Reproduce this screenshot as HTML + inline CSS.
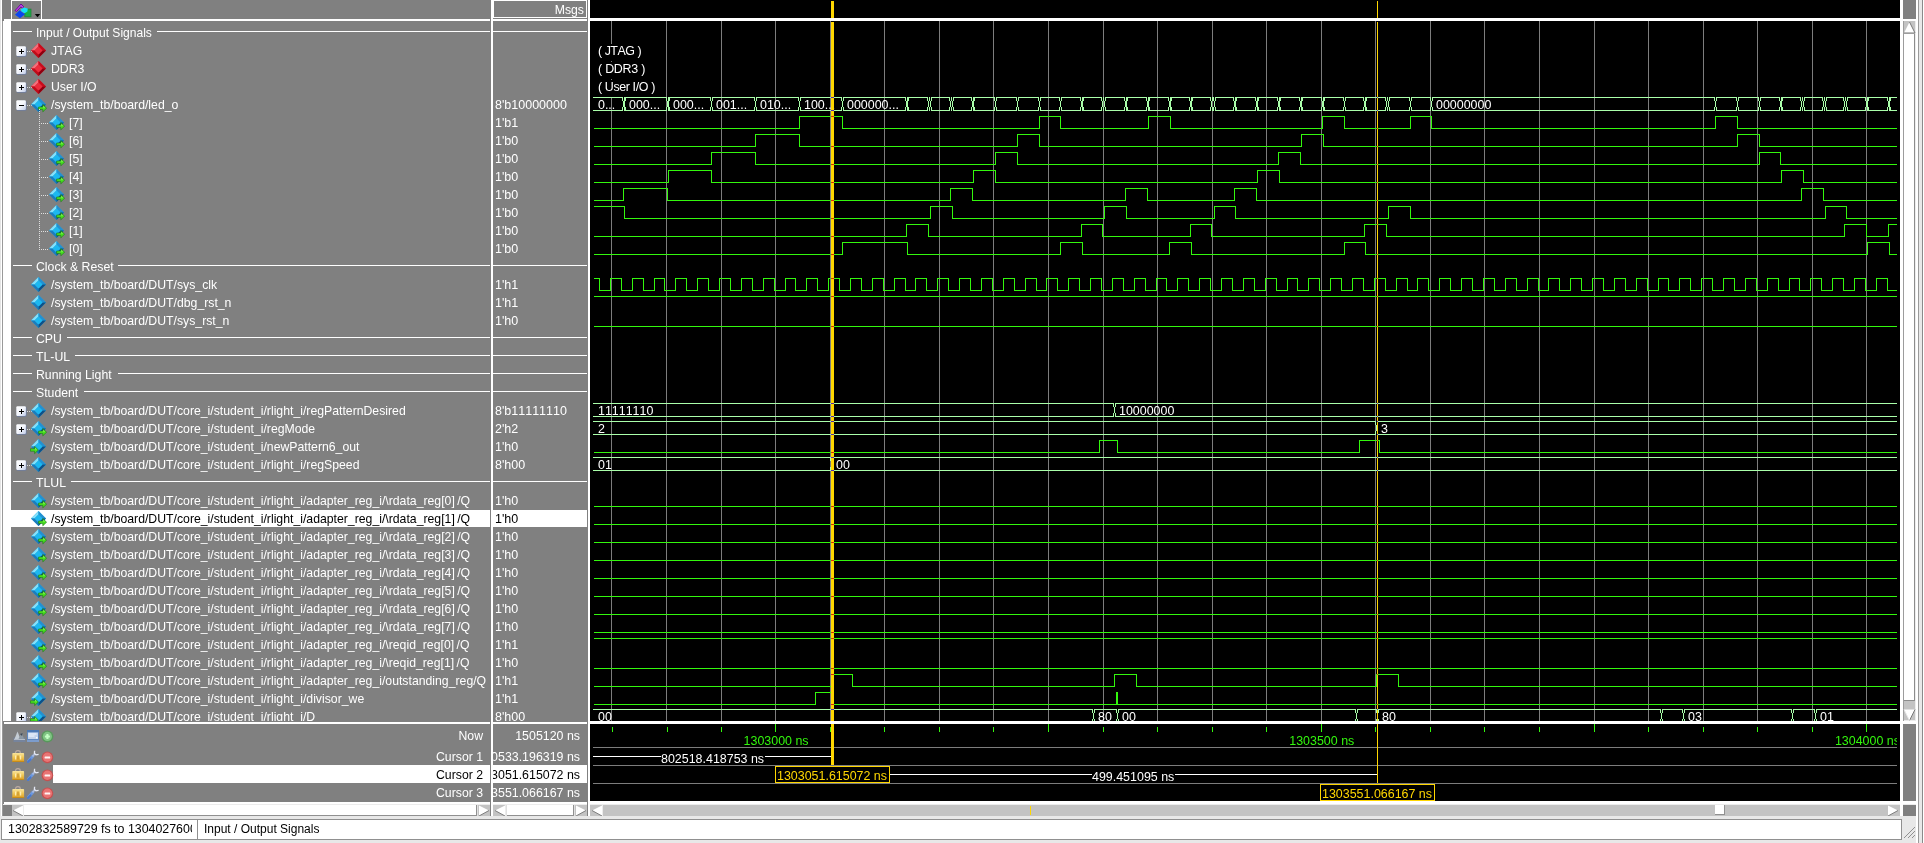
<!DOCTYPE html><html><head><meta charset="utf-8"><title>wave</title><style>

html,body{margin:0;padding:0}
body{width:1924px;height:843px;position:relative;overflow:hidden;background:#808080;font-family:"Liberation Sans",sans-serif;font-size:12.25px;color:#fff;font-kerning:none}
body div,body svg,body span{position:absolute;white-space:pre}
.t{height:18px;line-height:20px}
.r{text-align:right}

#w{left:0;top:0;width:1924px;height:843px;will-change:transform;background:transparent}
</style></head><body><div id="w">

<svg width="0" height="0" style="position:absolute">
<defs>
<linearGradient id="gb" x1="0" y1="0" x2="1" y2="1"><stop offset="0" stop-color="#ffffff"/><stop offset="0.5" stop-color="#f4f6fc"/><stop offset="1" stop-color="#c0cce8"/></linearGradient>
<g id="pbox">
 <rect x="0.6" y="0.8" width="10" height="10" rx="1.6" fill="#6c7ea6" opacity="0.85"/>
 <rect x="0.3" y="0.3" width="9.6" height="9.6" rx="1.2" fill="url(#gb)"/>
</g>
<g id="plus"><use href="#pbox"/>
 <rect x="3" y="5" width="5" height="1" fill="#000"/><rect x="5" y="3" width="1" height="5" fill="#000"/>
</g>
<g id="minus"><use href="#pbox"/>
 <rect x="3" y="5" width="5" height="1" fill="#000"/>
</g>
<g id="red">
 <path d="M7.5 0 L15 7.5 L7.5 15 L0 7.5Z" fill="#d81424"/>
 <path d="M7.5 0 L0 7.5 L3.5 7.5 L7.5 3.5Z" fill="#f4707c"/>
 <path d="M7.5 0 L15 7.5 L11.5 7.5 L7.5 3.5Z" fill="#c80c1c"/>
 <path d="M0 7.5 L7.5 15 L7.5 11.5 L3.5 7.5Z" fill="#c00c1a"/>
 <path d="M15 7.5 L7.5 15 L7.5 11.5 L11.5 7.5Z" fill="#8e0010"/>
 <path d="M7.5 3.5 L11.5 7.5 L7.5 11.5 L3.5 7.5Z" fill="#ec2c3c"/>
</g>
<g id="blue">
 <path d="M7.5 0 L15 7.5 L7.5 15 L0 7.5Z" fill="#18a4e0"/>
 <path d="M7.5 0 L0 7.5 L3.5 7.5 L7.5 3.5Z" fill="#86e0fa"/>
 <path d="M7.5 0 L15 7.5 L11.5 7.5 L7.5 3.5Z" fill="#2490d0"/>
 <path d="M0 7.5 L7.5 15 L7.5 11.5 L3.5 7.5Z" fill="#1c7cbc"/>
 <path d="M15 7.5 L7.5 15 L7.5 11.5 L11.5 7.5Z" fill="#0e5088"/>
 <path d="M7.5 3.5 L11.5 7.5 L7.5 11.5 L3.5 7.5Z" fill="#1cb8f0"/>
</g>
<g id="arrow">
 <path d="M0 2.4 L4.2 2.4 L4.2 0 L8 3.6 L4.2 7.2 L4.2 4.8 L0 4.8Z" fill="#48e020" stroke="#187410" stroke-width="0.6"/>
 <path d="M0.4 2.9 L4.6 2.9 L4.6 1.2 L6.6 3.2Z" fill="#a0ff70" opacity="0.7"/>
</g>
</defs></svg>

<div style="left:0px;top:0px;width:1px;height:843px;background:#e4e4e4;"></div>
<div style="left:1px;top:0px;width:1px;height:816px;background:#fff;"></div>
<div style="left:2px;top:21px;width:1px;height:795px;background:#999;"></div>
<div style="left:0px;top:816px;width:1924px;height:27px;background:#e8e8e8;"></div>
<div style="left:11px;top:0px;width:31px;height:19px;background:transparent;border:1px solid #fff;border-bottom:none;box-sizing:border-box"></div>
<svg style="left:8px;top:0px" width="36" height="19"><rect x="16.8" y="9.1" width="6.2" height="7.7" fill="#18b048" stroke="#228038" stroke-width="0.8"/><path d="M7 10.6 L13 4 L15.8 6.8 L14.4 8.2 L13 6.8 L8.6 11.4 Z" fill="#c448e4" stroke="#640094" stroke-width="0.9"/><path d="M7 14.8 L11.5 10.2 L17 14.2 L12 18.3 Z" fill="#0a46f0"/><path d="M12.6 9.4 L16 7.6 L19.8 8.6 L19.4 11.4 L16.6 13.2 L13.6 11.6 Z" fill="#14e0fc"/><path d="M26.8 14 L32.2 14 L29.5 17.2 Z" fill="#000"/></svg>
<div style="left:4px;top:19px;width:486px;height:2px;background:#fff;"></div>
<div style="left:493px;top:19px;width:94px;height:2px;background:#fff;"></div>
<div style="left:3px;top:21px;width:8px;height:700px;background:#fff;"></div>
<div style="left:491px;top:0px;width:2px;height:816px;background:#fff;"></div>
<div style="left:588px;top:0px;width:2px;height:816px;background:#fff;"></div>
<div style="left:493px;top:0px;width:94px;height:18px;background:transparent;border:1px solid #fff;box-sizing:border-box"></div>
<div class="t r" style="left:493px;top:0px;width:91px">Msgs</div>
<div style="left:13px;top:31px;width:19px;height:1px;background:#fff"></div>
<div class="t" style="left:36px;top:23px;font-size:12.05px">Input / Output Signals</div>
<div style="left:157px;top:31px;width:333px;height:1px;background:#fff"></div>
<div style="left:493px;top:31px;width:94px;height:1px;background:#fff"></div>
<svg style="left:16px;top:46px" width="11" height="11"><use href="#plus"/></svg>
<div style="left:27px;top:51px;width:5px;height:1px;background:repeating-linear-gradient(90deg,#d8d8d8 0 1px,transparent 1px 2px)"></div>
<svg style="left:31px;top:43px" width="16" height="16"><use href="#red"/></svg>
<div class="t" style="left:51px;top:41px">JTAG</div>
<svg style="left:16px;top:64px" width="11" height="11"><use href="#plus"/></svg>
<div style="left:27px;top:69px;width:5px;height:1px;background:repeating-linear-gradient(90deg,#d8d8d8 0 1px,transparent 1px 2px)"></div>
<svg style="left:31px;top:61px" width="16" height="16"><use href="#red"/></svg>
<div class="t" style="left:51px;top:59px">DDR3</div>
<svg style="left:16px;top:82px" width="11" height="11"><use href="#plus"/></svg>
<div style="left:27px;top:87px;width:5px;height:1px;background:repeating-linear-gradient(90deg,#d8d8d8 0 1px,transparent 1px 2px)"></div>
<svg style="left:31px;top:79px" width="16" height="16"><use href="#red"/></svg>
<div class="t" style="left:51px;top:77px">User I/O</div>
<svg style="left:16px;top:100px;height:11px" width="11"><use href="#minus"/></svg>
<div style="left:27px;top:105px;width:5px;height:1px;background:repeating-linear-gradient(90deg,#d8d8d8 0 1px,transparent 1px 2px)"></div>
<div style="left:0;top:95px;width:490px;height:18px;overflow:hidden;background:transparent">
<svg style="left:31px;top:2px" width="18" height="18"><use href="#blue"/><use href="#arrow" x="7.6" y="7.6"/></svg>
<div class="t" style="left:51px;top:0;color:#fff">/system_tb/board/led_o</div>
</div>
<div style="left:493px;top:95px;width:94px;height:18px;overflow:hidden"><div class="t" style="left:2px;top:0;color:#fff;font-size:12.5px">8'b10000000</div></div>
<div style="left:39px;top:113px;width:1px;height:18px;background:repeating-linear-gradient(180deg,#e0e0e0 0 1px,transparent 1px 2px)"></div>
<div style="left:40px;top:123px;width:9px;height:1px;background:repeating-linear-gradient(90deg,transparent 0 1px,#e0e0e0 1px 2px)"></div>
<div style="left:0;top:113px;width:490px;height:18px;overflow:hidden;background:transparent">
<svg style="left:49px;top:2px" width="18" height="18"><use href="#blue"/><use href="#arrow" x="7.6" y="7.6"/></svg>
<div class="t" style="left:69px;top:0;color:#fff">[7]</div>
</div>
<div style="left:493px;top:113px;width:94px;height:18px;overflow:hidden"><div class="t" style="left:2px;top:0;color:#fff;font-size:12.5px">1'b1</div></div>
<div style="left:39px;top:131px;width:1px;height:18px;background:repeating-linear-gradient(180deg,#e0e0e0 0 1px,transparent 1px 2px)"></div>
<div style="left:40px;top:141px;width:9px;height:1px;background:repeating-linear-gradient(90deg,transparent 0 1px,#e0e0e0 1px 2px)"></div>
<div style="left:0;top:131px;width:490px;height:18px;overflow:hidden;background:transparent">
<svg style="left:49px;top:2px" width="18" height="18"><use href="#blue"/><use href="#arrow" x="7.6" y="7.6"/></svg>
<div class="t" style="left:69px;top:0;color:#fff">[6]</div>
</div>
<div style="left:493px;top:131px;width:94px;height:18px;overflow:hidden"><div class="t" style="left:2px;top:0;color:#fff;font-size:12.5px">1'b0</div></div>
<div style="left:39px;top:149px;width:1px;height:18px;background:repeating-linear-gradient(180deg,#e0e0e0 0 1px,transparent 1px 2px)"></div>
<div style="left:40px;top:159px;width:9px;height:1px;background:repeating-linear-gradient(90deg,transparent 0 1px,#e0e0e0 1px 2px)"></div>
<div style="left:0;top:149px;width:490px;height:18px;overflow:hidden;background:transparent">
<svg style="left:49px;top:2px" width="18" height="18"><use href="#blue"/><use href="#arrow" x="7.6" y="7.6"/></svg>
<div class="t" style="left:69px;top:0;color:#fff">[5]</div>
</div>
<div style="left:493px;top:149px;width:94px;height:18px;overflow:hidden"><div class="t" style="left:2px;top:0;color:#fff;font-size:12.5px">1'b0</div></div>
<div style="left:39px;top:167px;width:1px;height:18px;background:repeating-linear-gradient(180deg,#e0e0e0 0 1px,transparent 1px 2px)"></div>
<div style="left:40px;top:177px;width:9px;height:1px;background:repeating-linear-gradient(90deg,transparent 0 1px,#e0e0e0 1px 2px)"></div>
<div style="left:0;top:167px;width:490px;height:18px;overflow:hidden;background:transparent">
<svg style="left:49px;top:2px" width="18" height="18"><use href="#blue"/><use href="#arrow" x="7.6" y="7.6"/></svg>
<div class="t" style="left:69px;top:0;color:#fff">[4]</div>
</div>
<div style="left:493px;top:167px;width:94px;height:18px;overflow:hidden"><div class="t" style="left:2px;top:0;color:#fff;font-size:12.5px">1'b0</div></div>
<div style="left:39px;top:185px;width:1px;height:18px;background:repeating-linear-gradient(180deg,#e0e0e0 0 1px,transparent 1px 2px)"></div>
<div style="left:40px;top:195px;width:9px;height:1px;background:repeating-linear-gradient(90deg,transparent 0 1px,#e0e0e0 1px 2px)"></div>
<div style="left:0;top:185px;width:490px;height:18px;overflow:hidden;background:transparent">
<svg style="left:49px;top:2px" width="18" height="18"><use href="#blue"/><use href="#arrow" x="7.6" y="7.6"/></svg>
<div class="t" style="left:69px;top:0;color:#fff">[3]</div>
</div>
<div style="left:493px;top:185px;width:94px;height:18px;overflow:hidden"><div class="t" style="left:2px;top:0;color:#fff;font-size:12.5px">1'b0</div></div>
<div style="left:39px;top:203px;width:1px;height:18px;background:repeating-linear-gradient(180deg,#e0e0e0 0 1px,transparent 1px 2px)"></div>
<div style="left:40px;top:213px;width:9px;height:1px;background:repeating-linear-gradient(90deg,transparent 0 1px,#e0e0e0 1px 2px)"></div>
<div style="left:0;top:203px;width:490px;height:18px;overflow:hidden;background:transparent">
<svg style="left:49px;top:2px" width="18" height="18"><use href="#blue"/><use href="#arrow" x="7.6" y="7.6"/></svg>
<div class="t" style="left:69px;top:0;color:#fff">[2]</div>
</div>
<div style="left:493px;top:203px;width:94px;height:18px;overflow:hidden"><div class="t" style="left:2px;top:0;color:#fff;font-size:12.5px">1'b0</div></div>
<div style="left:39px;top:221px;width:1px;height:18px;background:repeating-linear-gradient(180deg,#e0e0e0 0 1px,transparent 1px 2px)"></div>
<div style="left:40px;top:231px;width:9px;height:1px;background:repeating-linear-gradient(90deg,transparent 0 1px,#e0e0e0 1px 2px)"></div>
<div style="left:0;top:221px;width:490px;height:18px;overflow:hidden;background:transparent">
<svg style="left:49px;top:2px" width="18" height="18"><use href="#blue"/><use href="#arrow" x="7.6" y="7.6"/></svg>
<div class="t" style="left:69px;top:0;color:#fff">[1]</div>
</div>
<div style="left:493px;top:221px;width:94px;height:18px;overflow:hidden"><div class="t" style="left:2px;top:0;color:#fff;font-size:12.5px">1'b0</div></div>
<div style="left:39px;top:239px;width:1px;height:11px;background:repeating-linear-gradient(180deg,#e0e0e0 0 1px,transparent 1px 2px)"></div>
<div style="left:40px;top:249px;width:9px;height:1px;background:repeating-linear-gradient(90deg,transparent 0 1px,#e0e0e0 1px 2px)"></div>
<div style="left:0;top:239px;width:490px;height:18px;overflow:hidden;background:transparent">
<svg style="left:49px;top:2px" width="18" height="18"><use href="#blue"/><use href="#arrow" x="7.6" y="7.6"/></svg>
<div class="t" style="left:69px;top:0;color:#fff">[0]</div>
</div>
<div style="left:493px;top:239px;width:94px;height:18px;overflow:hidden"><div class="t" style="left:2px;top:0;color:#fff;font-size:12.5px">1'b0</div></div>
<div style="left:13px;top:265px;width:19px;height:1px;background:#fff"></div>
<div class="t" style="left:36px;top:257px">Clock &amp; Reset</div>
<div style="left:118px;top:265px;width:372px;height:1px;background:#fff"></div>
<div style="left:493px;top:265px;width:94px;height:1px;background:#fff"></div>
<div style="left:0;top:275px;width:490px;height:18px;overflow:hidden;background:transparent">
<svg style="left:31px;top:2px" width="16" height="16"><use href="#blue"/></svg>
<div class="t" style="left:51px;top:0;color:#fff">/system_tb/board/DUT/sys_clk</div>
</div>
<div style="left:493px;top:275px;width:94px;height:18px;overflow:hidden"><div class="t" style="left:2px;top:0;color:#fff;font-size:12.5px">1'h1</div></div>
<div style="left:0;top:293px;width:490px;height:18px;overflow:hidden;background:transparent">
<svg style="left:31px;top:2px" width="16" height="16"><use href="#blue"/></svg>
<div class="t" style="left:51px;top:0;color:#fff">/system_tb/board/DUT/dbg_rst_n</div>
</div>
<div style="left:493px;top:293px;width:94px;height:18px;overflow:hidden"><div class="t" style="left:2px;top:0;color:#fff;font-size:12.5px">1'h1</div></div>
<div style="left:0;top:311px;width:490px;height:18px;overflow:hidden;background:transparent">
<svg style="left:31px;top:2px" width="16" height="16"><use href="#blue"/></svg>
<div class="t" style="left:51px;top:0;color:#fff">/system_tb/board/DUT/sys_rst_n</div>
</div>
<div style="left:493px;top:311px;width:94px;height:18px;overflow:hidden"><div class="t" style="left:2px;top:0;color:#fff;font-size:12.5px">1'h0</div></div>
<div style="left:13px;top:337px;width:19px;height:1px;background:#fff"></div>
<div class="t" style="left:36px;top:329px">CPU</div>
<div style="left:67px;top:337px;width:423px;height:1px;background:#fff"></div>
<div style="left:493px;top:337px;width:94px;height:1px;background:#fff"></div>
<div style="left:13px;top:355px;width:19px;height:1px;background:#fff"></div>
<div class="t" style="left:36px;top:347px">TL-UL</div>
<div style="left:75px;top:355px;width:415px;height:1px;background:#fff"></div>
<div style="left:493px;top:355px;width:94px;height:1px;background:#fff"></div>
<div style="left:13px;top:373px;width:19px;height:1px;background:#fff"></div>
<div class="t" style="left:36px;top:365px">Running Light</div>
<div style="left:118px;top:373px;width:372px;height:1px;background:#fff"></div>
<div style="left:493px;top:373px;width:94px;height:1px;background:#fff"></div>
<div style="left:13px;top:391px;width:19px;height:1px;background:#fff"></div>
<div class="t" style="left:36px;top:383px">Student</div>
<div style="left:84px;top:391px;width:406px;height:1px;background:#fff"></div>
<div style="left:493px;top:391px;width:94px;height:1px;background:#fff"></div>
<svg style="left:16px;top:406px;height:11px" width="11"><use href="#plus"/></svg>
<div style="left:27px;top:411px;width:5px;height:1px;background:repeating-linear-gradient(90deg,#d8d8d8 0 1px,transparent 1px 2px)"></div>
<div style="left:0;top:401px;width:490px;height:18px;overflow:hidden;background:transparent">
<svg style="left:31px;top:2px" width="16" height="16"><use href="#blue"/></svg>
<div class="t" style="left:51px;top:0;color:#fff">/system_tb/board/DUT/core_i/student_i/rlight_i/regPatternDesired</div>
</div>
<div style="left:493px;top:401px;width:94px;height:18px;overflow:hidden"><div class="t" style="left:2px;top:0;color:#fff;font-size:12.5px">8'b11111110</div></div>
<svg style="left:16px;top:424px;height:11px" width="11"><use href="#plus"/></svg>
<div style="left:27px;top:429px;width:5px;height:1px;background:repeating-linear-gradient(90deg,#d8d8d8 0 1px,transparent 1px 2px)"></div>
<div style="left:0;top:419px;width:490px;height:18px;overflow:hidden;background:transparent">
<svg style="left:31px;top:2px" width="18" height="18"><use href="#blue"/><use href="#arrow" x="7.6" y="7.6"/></svg>
<div class="t" style="left:51px;top:0;color:#fff">/system_tb/board/DUT/core_i/student_i/regMode</div>
</div>
<div style="left:493px;top:419px;width:94px;height:18px;overflow:hidden"><div class="t" style="left:2px;top:0;color:#fff;font-size:12.5px">2'h2</div></div>
<div style="left:0;top:437px;width:490px;height:18px;overflow:hidden;background:transparent">
<svg style="left:30px;top:2px" width="18" height="18"><use href="#blue" x="1"/><use href="#arrow" x="0.4" y="7.4"/></svg>
<div class="t" style="left:51px;top:0;color:#fff">/system_tb/board/DUT/core_i/student_i/newPattern6_out</div>
</div>
<div style="left:493px;top:437px;width:94px;height:18px;overflow:hidden"><div class="t" style="left:2px;top:0;color:#fff;font-size:12.5px">1'h0</div></div>
<svg style="left:16px;top:460px;height:11px" width="11"><use href="#plus"/></svg>
<div style="left:27px;top:465px;width:5px;height:1px;background:repeating-linear-gradient(90deg,#d8d8d8 0 1px,transparent 1px 2px)"></div>
<div style="left:0;top:455px;width:490px;height:18px;overflow:hidden;background:transparent">
<svg style="left:31px;top:2px" width="16" height="16"><use href="#blue"/></svg>
<div class="t" style="left:51px;top:0;color:#fff">/system_tb/board/DUT/core_i/student_i/rlight_i/regSpeed</div>
</div>
<div style="left:493px;top:455px;width:94px;height:18px;overflow:hidden"><div class="t" style="left:2px;top:0;color:#fff;font-size:12.5px">8'h00</div></div>
<div style="left:13px;top:481px;width:19px;height:1px;background:#fff"></div>
<div class="t" style="left:36px;top:473px">TLUL</div>
<div style="left:71px;top:481px;width:419px;height:1px;background:#fff"></div>
<div style="left:493px;top:481px;width:94px;height:1px;background:#fff"></div>
<div style="left:0;top:491px;width:490px;height:18px;overflow:hidden;background:transparent">
<svg style="left:31px;top:2px" width="18" height="18"><use href="#blue"/><use href="#arrow" x="7.6" y="7.6"/></svg>
<div class="t" style="left:51px;top:0;color:#fff;word-spacing:-1px">/system_tb/board/DUT/core_i/student_i/rlight_i/adapter_reg_i/\rdata_reg[0] /Q</div>
</div>
<div style="left:493px;top:491px;width:94px;height:18px;overflow:hidden"><div class="t" style="left:2px;top:0;color:#fff;font-size:12.5px">1'h0</div></div>
<div style="left:11px;top:510px;width:479px;height:17px;background:#fff;"></div>
<div style="left:493px;top:510px;width:94px;height:17px;background:#fff;"></div>
<div style="left:0;top:509px;width:490px;height:18px;overflow:hidden;background:transparent">
<svg style="left:31px;top:2px" width="18" height="18"><use href="#blue"/><use href="#arrow" x="7.6" y="7.6"/></svg>
<div class="t" style="left:51px;top:0;color:#000;word-spacing:-1px">/system_tb/board/DUT/core_i/student_i/rlight_i/adapter_reg_i/\rdata_reg[1] /Q</div>
</div>
<div style="left:493px;top:509px;width:94px;height:18px;overflow:hidden"><div class="t" style="left:2px;top:0;color:#000;font-size:12.5px">1'h0</div></div>
<div style="left:0;top:527px;width:490px;height:18px;overflow:hidden;background:transparent">
<svg style="left:31px;top:2px" width="18" height="18"><use href="#blue"/><use href="#arrow" x="7.6" y="7.6"/></svg>
<div class="t" style="left:51px;top:0;color:#fff;word-spacing:-1px">/system_tb/board/DUT/core_i/student_i/rlight_i/adapter_reg_i/\rdata_reg[2] /Q</div>
</div>
<div style="left:493px;top:527px;width:94px;height:18px;overflow:hidden"><div class="t" style="left:2px;top:0;color:#fff;font-size:12.5px">1'h0</div></div>
<div style="left:0;top:545px;width:490px;height:18px;overflow:hidden;background:transparent">
<svg style="left:31px;top:2px" width="18" height="18"><use href="#blue"/><use href="#arrow" x="7.6" y="7.6"/></svg>
<div class="t" style="left:51px;top:0;color:#fff;word-spacing:-1px">/system_tb/board/DUT/core_i/student_i/rlight_i/adapter_reg_i/\rdata_reg[3] /Q</div>
</div>
<div style="left:493px;top:545px;width:94px;height:18px;overflow:hidden"><div class="t" style="left:2px;top:0;color:#fff;font-size:12.5px">1'h0</div></div>
<div style="left:0;top:563px;width:490px;height:18px;overflow:hidden;background:transparent">
<svg style="left:31px;top:2px" width="18" height="18"><use href="#blue"/><use href="#arrow" x="7.6" y="7.6"/></svg>
<div class="t" style="left:51px;top:0;color:#fff;word-spacing:-1px">/system_tb/board/DUT/core_i/student_i/rlight_i/adapter_reg_i/\rdata_reg[4] /Q</div>
</div>
<div style="left:493px;top:563px;width:94px;height:18px;overflow:hidden"><div class="t" style="left:2px;top:0;color:#fff;font-size:12.5px">1'h0</div></div>
<div style="left:0;top:581px;width:490px;height:18px;overflow:hidden;background:transparent">
<svg style="left:31px;top:2px" width="18" height="18"><use href="#blue"/><use href="#arrow" x="7.6" y="7.6"/></svg>
<div class="t" style="left:51px;top:0;color:#fff;word-spacing:-1px">/system_tb/board/DUT/core_i/student_i/rlight_i/adapter_reg_i/\rdata_reg[5] /Q</div>
</div>
<div style="left:493px;top:581px;width:94px;height:18px;overflow:hidden"><div class="t" style="left:2px;top:0;color:#fff;font-size:12.5px">1'h0</div></div>
<div style="left:0;top:599px;width:490px;height:18px;overflow:hidden;background:transparent">
<svg style="left:31px;top:2px" width="18" height="18"><use href="#blue"/><use href="#arrow" x="7.6" y="7.6"/></svg>
<div class="t" style="left:51px;top:0;color:#fff;word-spacing:-1px">/system_tb/board/DUT/core_i/student_i/rlight_i/adapter_reg_i/\rdata_reg[6] /Q</div>
</div>
<div style="left:493px;top:599px;width:94px;height:18px;overflow:hidden"><div class="t" style="left:2px;top:0;color:#fff;font-size:12.5px">1'h0</div></div>
<div style="left:0;top:617px;width:490px;height:18px;overflow:hidden;background:transparent">
<svg style="left:31px;top:2px" width="18" height="18"><use href="#blue"/><use href="#arrow" x="7.6" y="7.6"/></svg>
<div class="t" style="left:51px;top:0;color:#fff;word-spacing:-1px">/system_tb/board/DUT/core_i/student_i/rlight_i/adapter_reg_i/\rdata_reg[7] /Q</div>
</div>
<div style="left:493px;top:617px;width:94px;height:18px;overflow:hidden"><div class="t" style="left:2px;top:0;color:#fff;font-size:12.5px">1'h0</div></div>
<div style="left:0;top:635px;width:490px;height:18px;overflow:hidden;background:transparent">
<svg style="left:31px;top:2px" width="18" height="18"><use href="#blue"/><use href="#arrow" x="7.6" y="7.6"/></svg>
<div class="t" style="left:51px;top:0;color:#fff;word-spacing:-1px">/system_tb/board/DUT/core_i/student_i/rlight_i/adapter_reg_i/\reqid_reg[0] /Q</div>
</div>
<div style="left:493px;top:635px;width:94px;height:18px;overflow:hidden"><div class="t" style="left:2px;top:0;color:#fff;font-size:12.5px">1'h1</div></div>
<div style="left:0;top:653px;width:490px;height:18px;overflow:hidden;background:transparent">
<svg style="left:31px;top:2px" width="18" height="18"><use href="#blue"/><use href="#arrow" x="7.6" y="7.6"/></svg>
<div class="t" style="left:51px;top:0;color:#fff;word-spacing:-1px">/system_tb/board/DUT/core_i/student_i/rlight_i/adapter_reg_i/\reqid_reg[1] /Q</div>
</div>
<div style="left:493px;top:653px;width:94px;height:18px;overflow:hidden"><div class="t" style="left:2px;top:0;color:#fff;font-size:12.5px">1'h0</div></div>
<div style="left:0;top:671px;width:490px;height:18px;overflow:hidden;background:transparent">
<svg style="left:31px;top:2px" width="18" height="18"><use href="#blue"/><use href="#arrow" x="7.6" y="7.6"/></svg>
<div class="t" style="left:51px;top:0;color:#fff">/system_tb/board/DUT/core_i/student_i/rlight_i/adapter_reg_i/outstanding_reg/Q</div>
</div>
<div style="left:493px;top:671px;width:94px;height:18px;overflow:hidden"><div class="t" style="left:2px;top:0;color:#fff;font-size:12.5px">1'h1</div></div>
<div style="left:0;top:689px;width:490px;height:18px;overflow:hidden;background:transparent">
<svg style="left:30px;top:2px" width="18" height="18"><use href="#blue" x="1"/><use href="#arrow" x="0.4" y="7.4"/></svg>
<div class="t" style="left:51px;top:0;color:#fff">/system_tb/board/DUT/core_i/student_i/rlight_i/divisor_we</div>
</div>
<div style="left:493px;top:689px;width:94px;height:18px;overflow:hidden"><div class="t" style="left:2px;top:0;color:#fff;font-size:12.5px">1'h1</div></div>
<svg style="left:16px;top:712px;height:9px" width="11"><use href="#plus"/></svg>
<div style="left:27px;top:717px;width:5px;height:1px;background:repeating-linear-gradient(90deg,#d8d8d8 0 1px,transparent 1px 2px)"></div>
<div style="left:0;top:707px;width:490px;height:14px;overflow:hidden;background:transparent">
<svg style="left:30px;top:2px" width="18" height="18"><use href="#blue" x="1"/><use href="#arrow" x="0.4" y="7.4"/></svg>
<div class="t" style="left:51px;top:0;color:#fff">/system_tb/board/DUT/core_i/student_i/rlight_i/D</div>
</div>
<div style="left:493px;top:707px;width:94px;height:14px;overflow:hidden"><div class="t" style="left:2px;top:0;color:#fff;font-size:12.5px">8'h00</div></div>
<div style="left:39px;top:109px;width:1px;height:4px;background:repeating-linear-gradient(180deg,#e0e0e0 0 1px,transparent 1px 2px)"></div>
<div style="left:4px;top:722px;width:486px;height:2px;background:#fff;"></div>
<div style="left:493px;top:722px;width:94px;height:2px;background:#fff;"></div>
<svg style="left:590px;top:0;font-kerning:none" width="1310" height="802" viewBox="590 0 1310 802" shape-rendering="crispEdges" font-family="Liberation Sans, sans-serif" font-size="12.45px">
<rect x="590" y="0" width="1310" height="801" fill="#000"/>
<rect x="611" y="21" width="1" height="700" fill="#7d7d7d"/>
<rect x="666" y="21" width="1" height="700" fill="#7d7d7d"/>
<rect x="721" y="21" width="1" height="700" fill="#7d7d7d"/>
<rect x="775" y="21" width="1" height="700" fill="#7d7d7d"/>
<rect x="830" y="21" width="1" height="700" fill="#7d7d7d"/>
<rect x="884" y="21" width="1" height="700" fill="#7d7d7d"/>
<rect x="939" y="21" width="1" height="700" fill="#7d7d7d"/>
<rect x="993" y="21" width="1" height="700" fill="#7d7d7d"/>
<rect x="1048" y="21" width="1" height="700" fill="#7d7d7d"/>
<rect x="1103" y="21" width="1" height="700" fill="#7d7d7d"/>
<rect x="1157" y="21" width="1" height="700" fill="#7d7d7d"/>
<rect x="1212" y="21" width="1" height="700" fill="#7d7d7d"/>
<rect x="1266" y="21" width="1" height="700" fill="#7d7d7d"/>
<rect x="1321" y="21" width="1" height="700" fill="#7d7d7d"/>
<rect x="1375" y="21" width="1" height="700" fill="#7d7d7d"/>
<rect x="1430" y="21" width="1" height="700" fill="#7d7d7d"/>
<rect x="1484" y="21" width="1" height="700" fill="#7d7d7d"/>
<rect x="1539" y="21" width="1" height="700" fill="#7d7d7d"/>
<rect x="1594" y="21" width="1" height="700" fill="#7d7d7d"/>
<rect x="1648" y="21" width="1" height="700" fill="#7d7d7d"/>
<rect x="1703" y="21" width="1" height="700" fill="#7d7d7d"/>
<rect x="1757" y="21" width="1" height="700" fill="#7d7d7d"/>
<rect x="1812" y="21" width="1" height="700" fill="#7d7d7d"/>
<rect x="1866" y="21" width="1" height="700" fill="#7d7d7d"/>
<rect x="590" y="18" width="1310" height="3" fill="#fff"/>
<path d="M594 254.5H842.5V242.5H907.5V254.5H1060.5V242.5H1082.5V254.5H1169.5V242.5H1191.5V254.5H1344.5V242.5H1365.5V254.5H1867.5V242.5H1889.5V254.5H1897" fill="none" stroke="#33f70d" stroke-width="1"/>
<path d="M594 236.5H906.5V224.5H928.5V236.5H1081.5V224.5H1102.5V236.5H1190.5V224.5H1211.5V236.5H1364.5V224.5H1386.5V236.5H1844.5V224.5H1866.5V236.5H1888.5V224.5H1897" fill="none" stroke="#33f70d" stroke-width="1"/>
<path d="M594 206.5H624.5V218.5H930.5V206.5H952.5V218.5H1104.5V206.5H1126.5V218.5H1214.5V206.5H1235.5V218.5H1388.5V206.5H1410.5V218.5H1825.5V206.5H1846.5V218.5H1897" fill="none" stroke="#33f70d" stroke-width="1"/>
<path d="M594 200.5H623.5V188.5H667.5V200.5H950.5V188.5H972.5V200.5H1125.5V188.5H1147.5V200.5H1234.5V188.5H1256.5V200.5H1801.5V188.5H1823.5V200.5H1897" fill="none" stroke="#33f70d" stroke-width="1"/>
<path d="M594 182.5H668.5V170.5H711.5V182.5H973.5V170.5H995.5V182.5H1257.5V170.5H1279.5V182.5H1781.5V170.5H1803.5V182.5H1897" fill="none" stroke="#33f70d" stroke-width="1"/>
<path d="M594 164.5H711.5V152.5H755.5V164.5H995.5V152.5H1017.5V164.5H1278.5V152.5H1300.5V164.5H1759.5V152.5H1780.5V164.5H1897" fill="none" stroke="#33f70d" stroke-width="1"/>
<path d="M594 146.5H755.5V134.5H799.5V146.5H1017.5V134.5H1039.5V146.5H1301.5V134.5H1323.5V146.5H1737.5V134.5H1759.5V146.5H1897" fill="none" stroke="#33f70d" stroke-width="1"/>
<path d="M594 128.5H799.5V116.5H842.5V128.5H1039.5V116.5H1060.5V128.5H1148.5V116.5H1170.5V128.5H1322.5V116.5H1344.5V128.5H1410.5V116.5H1431.5V128.5H1715.5V116.5H1737.5V128.5H1897" fill="none" stroke="#33f70d" stroke-width="1"/>
<rect x="593" y="97" width="30" height="1" fill="#aaffaa"/>
<rect x="593" y="110" width="30" height="1" fill="#aaffaa"/>
<rect x="625" y="97" width="42" height="1" fill="#aaffaa"/>
<rect x="625" y="110" width="42" height="1" fill="#aaffaa"/>
<rect x="669" y="97" width="42" height="1" fill="#aaffaa"/>
<rect x="669" y="110" width="42" height="1" fill="#aaffaa"/>
<rect x="712" y="97" width="43" height="1" fill="#aaffaa"/>
<rect x="712" y="110" width="43" height="1" fill="#aaffaa"/>
<rect x="756" y="97" width="43" height="1" fill="#aaffaa"/>
<rect x="756" y="110" width="43" height="1" fill="#aaffaa"/>
<rect x="800" y="97" width="42" height="1" fill="#aaffaa"/>
<rect x="800" y="110" width="42" height="1" fill="#aaffaa"/>
<rect x="843" y="97" width="63" height="1" fill="#aaffaa"/>
<rect x="843" y="110" width="63" height="1" fill="#aaffaa"/>
<rect x="908" y="97" width="20" height="1" fill="#aaffaa"/>
<rect x="908" y="110" width="20" height="1" fill="#aaffaa"/>
<rect x="929" y="97" width="1" height="1" fill="#aaffaa"/>
<rect x="929" y="110" width="1" height="1" fill="#aaffaa"/>
<rect x="931" y="97" width="19" height="1" fill="#aaffaa"/>
<rect x="931" y="110" width="19" height="1" fill="#aaffaa"/>
<rect x="951" y="97" width="1" height="1" fill="#aaffaa"/>
<rect x="951" y="110" width="1" height="1" fill="#aaffaa"/>
<rect x="953" y="97" width="19" height="1" fill="#aaffaa"/>
<rect x="953" y="110" width="19" height="1" fill="#aaffaa"/>
<rect x="974" y="97" width="21" height="1" fill="#aaffaa"/>
<rect x="974" y="110" width="21" height="1" fill="#aaffaa"/>
<rect x="996" y="97" width="21" height="1" fill="#aaffaa"/>
<rect x="996" y="110" width="21" height="1" fill="#aaffaa"/>
<rect x="1018" y="97" width="21" height="1" fill="#aaffaa"/>
<rect x="1018" y="110" width="21" height="1" fill="#aaffaa"/>
<rect x="1040" y="97" width="20" height="1" fill="#aaffaa"/>
<rect x="1040" y="110" width="20" height="1" fill="#aaffaa"/>
<rect x="1061" y="97" width="20" height="1" fill="#aaffaa"/>
<rect x="1061" y="110" width="20" height="1" fill="#aaffaa"/>
<rect x="1083" y="97" width="19" height="1" fill="#aaffaa"/>
<rect x="1083" y="110" width="19" height="1" fill="#aaffaa"/>
<rect x="1103" y="97" width="1" height="1" fill="#aaffaa"/>
<rect x="1103" y="110" width="1" height="1" fill="#aaffaa"/>
<rect x="1105" y="97" width="20" height="1" fill="#aaffaa"/>
<rect x="1105" y="110" width="20" height="1" fill="#aaffaa"/>
<rect x="1127" y="97" width="20" height="1" fill="#aaffaa"/>
<rect x="1127" y="110" width="20" height="1" fill="#aaffaa"/>
<rect x="1149" y="97" width="20" height="1" fill="#aaffaa"/>
<rect x="1149" y="110" width="20" height="1" fill="#aaffaa"/>
<rect x="1171" y="97" width="19" height="1" fill="#aaffaa"/>
<rect x="1171" y="110" width="19" height="1" fill="#aaffaa"/>
<rect x="1192" y="97" width="19" height="1" fill="#aaffaa"/>
<rect x="1192" y="110" width="19" height="1" fill="#aaffaa"/>
<rect x="1212" y="97" width="2" height="1" fill="#aaffaa"/>
<rect x="1212" y="110" width="2" height="1" fill="#aaffaa"/>
<rect x="1215" y="97" width="19" height="1" fill="#aaffaa"/>
<rect x="1215" y="110" width="19" height="1" fill="#aaffaa"/>
<rect x="1236" y="97" width="20" height="1" fill="#aaffaa"/>
<rect x="1236" y="110" width="20" height="1" fill="#aaffaa"/>
<rect x="1258" y="97" width="20" height="1" fill="#aaffaa"/>
<rect x="1258" y="110" width="20" height="1" fill="#aaffaa"/>
<rect x="1280" y="97" width="20" height="1" fill="#aaffaa"/>
<rect x="1280" y="110" width="20" height="1" fill="#aaffaa"/>
<rect x="1302" y="97" width="20" height="1" fill="#aaffaa"/>
<rect x="1302" y="110" width="20" height="1" fill="#aaffaa"/>
<rect x="1324" y="97" width="20" height="1" fill="#aaffaa"/>
<rect x="1324" y="110" width="20" height="1" fill="#aaffaa"/>
<rect x="1345" y="97" width="19" height="1" fill="#aaffaa"/>
<rect x="1345" y="110" width="19" height="1" fill="#aaffaa"/>
<rect x="1366" y="97" width="20" height="1" fill="#aaffaa"/>
<rect x="1366" y="110" width="20" height="1" fill="#aaffaa"/>
<rect x="1387" y="97" width="1" height="1" fill="#aaffaa"/>
<rect x="1387" y="110" width="1" height="1" fill="#aaffaa"/>
<rect x="1389" y="97" width="21" height="1" fill="#aaffaa"/>
<rect x="1389" y="110" width="21" height="1" fill="#aaffaa"/>
<rect x="1411" y="97" width="20" height="1" fill="#aaffaa"/>
<rect x="1411" y="110" width="20" height="1" fill="#aaffaa"/>
<rect x="1432" y="97" width="283" height="1" fill="#aaffaa"/>
<rect x="1432" y="110" width="283" height="1" fill="#aaffaa"/>
<rect x="1716" y="97" width="21" height="1" fill="#aaffaa"/>
<rect x="1716" y="110" width="21" height="1" fill="#aaffaa"/>
<rect x="1738" y="97" width="21" height="1" fill="#aaffaa"/>
<rect x="1738" y="110" width="21" height="1" fill="#aaffaa"/>
<rect x="1760" y="97" width="20" height="1" fill="#aaffaa"/>
<rect x="1760" y="110" width="20" height="1" fill="#aaffaa"/>
<rect x="1782" y="97" width="19" height="1" fill="#aaffaa"/>
<rect x="1782" y="110" width="19" height="1" fill="#aaffaa"/>
<rect x="1802" y="97" width="1" height="1" fill="#aaffaa"/>
<rect x="1802" y="110" width="1" height="1" fill="#aaffaa"/>
<rect x="1804" y="97" width="19" height="1" fill="#aaffaa"/>
<rect x="1804" y="110" width="19" height="1" fill="#aaffaa"/>
<rect x="1824" y="97" width="1" height="1" fill="#aaffaa"/>
<rect x="1824" y="110" width="1" height="1" fill="#aaffaa"/>
<rect x="1826" y="97" width="18" height="1" fill="#aaffaa"/>
<rect x="1826" y="110" width="18" height="1" fill="#aaffaa"/>
<rect x="1845" y="97" width="1" height="1" fill="#aaffaa"/>
<rect x="1845" y="110" width="1" height="1" fill="#aaffaa"/>
<rect x="1847" y="97" width="19" height="1" fill="#aaffaa"/>
<rect x="1847" y="110" width="19" height="1" fill="#aaffaa"/>
<rect x="1868" y="97" width="20" height="1" fill="#aaffaa"/>
<rect x="1868" y="110" width="20" height="1" fill="#aaffaa"/>
<rect x="1890" y="97" width="7" height="1" fill="#aaffaa"/>
<rect x="1890" y="110" width="7" height="1" fill="#aaffaa"/>
<rect x="622" y="97" width="1" height="4" fill="#aaffaa"/>
<rect x="622" y="107" width="1" height="4" fill="#aaffaa"/>
<rect x="625" y="97" width="1" height="4" fill="#aaffaa"/>
<rect x="625" y="107" width="1" height="4" fill="#aaffaa"/>
<rect x="623" y="101" width="1" height="6" fill="#aaffaa"/>
<rect x="624" y="101" width="1" height="6" fill="#aaffaa"/>
<rect x="624" y="97" width="1" height="14" fill="#aaffaa"/>
<rect x="666" y="97" width="1" height="4" fill="#aaffaa"/>
<rect x="666" y="107" width="1" height="4" fill="#aaffaa"/>
<rect x="669" y="97" width="1" height="4" fill="#aaffaa"/>
<rect x="669" y="107" width="1" height="4" fill="#aaffaa"/>
<rect x="667" y="101" width="1" height="6" fill="#aaffaa"/>
<rect x="668" y="101" width="1" height="6" fill="#aaffaa"/>
<rect x="668" y="97" width="1" height="14" fill="#aaffaa"/>
<rect x="710" y="97" width="1" height="4" fill="#aaffaa"/>
<rect x="710" y="107" width="1" height="4" fill="#aaffaa"/>
<rect x="712" y="97" width="1" height="4" fill="#aaffaa"/>
<rect x="712" y="107" width="1" height="4" fill="#aaffaa"/>
<rect x="711" y="101" width="1" height="6" fill="#aaffaa"/>
<rect x="754" y="97" width="1" height="4" fill="#aaffaa"/>
<rect x="754" y="107" width="1" height="4" fill="#aaffaa"/>
<rect x="756" y="97" width="1" height="4" fill="#aaffaa"/>
<rect x="756" y="107" width="1" height="4" fill="#aaffaa"/>
<rect x="755" y="101" width="1" height="6" fill="#aaffaa"/>
<rect x="798" y="97" width="1" height="4" fill="#aaffaa"/>
<rect x="798" y="107" width="1" height="4" fill="#aaffaa"/>
<rect x="800" y="97" width="1" height="4" fill="#aaffaa"/>
<rect x="800" y="107" width="1" height="4" fill="#aaffaa"/>
<rect x="799" y="101" width="1" height="6" fill="#aaffaa"/>
<rect x="841" y="97" width="1" height="4" fill="#aaffaa"/>
<rect x="841" y="107" width="1" height="4" fill="#aaffaa"/>
<rect x="843" y="97" width="1" height="4" fill="#aaffaa"/>
<rect x="843" y="107" width="1" height="4" fill="#aaffaa"/>
<rect x="842" y="101" width="1" height="6" fill="#aaffaa"/>
<rect x="905" y="97" width="1" height="4" fill="#aaffaa"/>
<rect x="905" y="107" width="1" height="4" fill="#aaffaa"/>
<rect x="908" y="97" width="1" height="4" fill="#aaffaa"/>
<rect x="908" y="107" width="1" height="4" fill="#aaffaa"/>
<rect x="906" y="101" width="1" height="6" fill="#aaffaa"/>
<rect x="907" y="101" width="1" height="6" fill="#aaffaa"/>
<rect x="907" y="97" width="1" height="14" fill="#aaffaa"/>
<rect x="927" y="97" width="1" height="4" fill="#aaffaa"/>
<rect x="927" y="107" width="1" height="4" fill="#aaffaa"/>
<rect x="929" y="97" width="1" height="4" fill="#aaffaa"/>
<rect x="929" y="107" width="1" height="4" fill="#aaffaa"/>
<rect x="928" y="101" width="1" height="6" fill="#aaffaa"/>
<rect x="929" y="97" width="1" height="4" fill="#aaffaa"/>
<rect x="929" y="107" width="1" height="4" fill="#aaffaa"/>
<rect x="931" y="97" width="1" height="4" fill="#aaffaa"/>
<rect x="931" y="107" width="1" height="4" fill="#aaffaa"/>
<rect x="930" y="101" width="1" height="6" fill="#aaffaa"/>
<rect x="949" y="97" width="1" height="4" fill="#aaffaa"/>
<rect x="949" y="107" width="1" height="4" fill="#aaffaa"/>
<rect x="951" y="97" width="1" height="4" fill="#aaffaa"/>
<rect x="951" y="107" width="1" height="4" fill="#aaffaa"/>
<rect x="950" y="101" width="1" height="6" fill="#aaffaa"/>
<rect x="951" y="97" width="1" height="4" fill="#aaffaa"/>
<rect x="951" y="107" width="1" height="4" fill="#aaffaa"/>
<rect x="953" y="97" width="1" height="4" fill="#aaffaa"/>
<rect x="953" y="107" width="1" height="4" fill="#aaffaa"/>
<rect x="952" y="101" width="1" height="6" fill="#aaffaa"/>
<rect x="971" y="97" width="1" height="4" fill="#aaffaa"/>
<rect x="971" y="107" width="1" height="4" fill="#aaffaa"/>
<rect x="974" y="97" width="1" height="4" fill="#aaffaa"/>
<rect x="974" y="107" width="1" height="4" fill="#aaffaa"/>
<rect x="972" y="101" width="1" height="6" fill="#aaffaa"/>
<rect x="973" y="101" width="1" height="6" fill="#aaffaa"/>
<rect x="973" y="97" width="1" height="14" fill="#aaffaa"/>
<rect x="994" y="97" width="1" height="4" fill="#aaffaa"/>
<rect x="994" y="107" width="1" height="4" fill="#aaffaa"/>
<rect x="996" y="97" width="1" height="4" fill="#aaffaa"/>
<rect x="996" y="107" width="1" height="4" fill="#aaffaa"/>
<rect x="995" y="101" width="1" height="6" fill="#aaffaa"/>
<rect x="1016" y="97" width="1" height="4" fill="#aaffaa"/>
<rect x="1016" y="107" width="1" height="4" fill="#aaffaa"/>
<rect x="1018" y="97" width="1" height="4" fill="#aaffaa"/>
<rect x="1018" y="107" width="1" height="4" fill="#aaffaa"/>
<rect x="1017" y="101" width="1" height="6" fill="#aaffaa"/>
<rect x="1038" y="97" width="1" height="4" fill="#aaffaa"/>
<rect x="1038" y="107" width="1" height="4" fill="#aaffaa"/>
<rect x="1040" y="97" width="1" height="4" fill="#aaffaa"/>
<rect x="1040" y="107" width="1" height="4" fill="#aaffaa"/>
<rect x="1039" y="101" width="1" height="6" fill="#aaffaa"/>
<rect x="1059" y="97" width="1" height="4" fill="#aaffaa"/>
<rect x="1059" y="107" width="1" height="4" fill="#aaffaa"/>
<rect x="1061" y="97" width="1" height="4" fill="#aaffaa"/>
<rect x="1061" y="107" width="1" height="4" fill="#aaffaa"/>
<rect x="1060" y="101" width="1" height="6" fill="#aaffaa"/>
<rect x="1080" y="97" width="1" height="4" fill="#aaffaa"/>
<rect x="1080" y="107" width="1" height="4" fill="#aaffaa"/>
<rect x="1083" y="97" width="1" height="4" fill="#aaffaa"/>
<rect x="1083" y="107" width="1" height="4" fill="#aaffaa"/>
<rect x="1081" y="101" width="1" height="6" fill="#aaffaa"/>
<rect x="1082" y="101" width="1" height="6" fill="#aaffaa"/>
<rect x="1082" y="97" width="1" height="14" fill="#aaffaa"/>
<rect x="1101" y="97" width="1" height="4" fill="#aaffaa"/>
<rect x="1101" y="107" width="1" height="4" fill="#aaffaa"/>
<rect x="1103" y="97" width="1" height="4" fill="#aaffaa"/>
<rect x="1103" y="107" width="1" height="4" fill="#aaffaa"/>
<rect x="1102" y="101" width="1" height="6" fill="#aaffaa"/>
<rect x="1103" y="97" width="1" height="4" fill="#aaffaa"/>
<rect x="1103" y="107" width="1" height="4" fill="#aaffaa"/>
<rect x="1105" y="97" width="1" height="4" fill="#aaffaa"/>
<rect x="1105" y="107" width="1" height="4" fill="#aaffaa"/>
<rect x="1104" y="101" width="1" height="6" fill="#aaffaa"/>
<rect x="1124" y="97" width="1" height="4" fill="#aaffaa"/>
<rect x="1124" y="107" width="1" height="4" fill="#aaffaa"/>
<rect x="1127" y="97" width="1" height="4" fill="#aaffaa"/>
<rect x="1127" y="107" width="1" height="4" fill="#aaffaa"/>
<rect x="1125" y="101" width="1" height="6" fill="#aaffaa"/>
<rect x="1126" y="101" width="1" height="6" fill="#aaffaa"/>
<rect x="1126" y="97" width="1" height="14" fill="#aaffaa"/>
<rect x="1146" y="97" width="1" height="4" fill="#aaffaa"/>
<rect x="1146" y="107" width="1" height="4" fill="#aaffaa"/>
<rect x="1149" y="97" width="1" height="4" fill="#aaffaa"/>
<rect x="1149" y="107" width="1" height="4" fill="#aaffaa"/>
<rect x="1147" y="101" width="1" height="6" fill="#aaffaa"/>
<rect x="1148" y="101" width="1" height="6" fill="#aaffaa"/>
<rect x="1148" y="97" width="1" height="14" fill="#aaffaa"/>
<rect x="1168" y="97" width="1" height="4" fill="#aaffaa"/>
<rect x="1168" y="107" width="1" height="4" fill="#aaffaa"/>
<rect x="1171" y="97" width="1" height="4" fill="#aaffaa"/>
<rect x="1171" y="107" width="1" height="4" fill="#aaffaa"/>
<rect x="1169" y="101" width="1" height="6" fill="#aaffaa"/>
<rect x="1170" y="101" width="1" height="6" fill="#aaffaa"/>
<rect x="1170" y="97" width="1" height="14" fill="#aaffaa"/>
<rect x="1189" y="97" width="1" height="4" fill="#aaffaa"/>
<rect x="1189" y="107" width="1" height="4" fill="#aaffaa"/>
<rect x="1192" y="97" width="1" height="4" fill="#aaffaa"/>
<rect x="1192" y="107" width="1" height="4" fill="#aaffaa"/>
<rect x="1190" y="101" width="1" height="6" fill="#aaffaa"/>
<rect x="1191" y="101" width="1" height="6" fill="#aaffaa"/>
<rect x="1191" y="97" width="1" height="14" fill="#aaffaa"/>
<rect x="1210" y="97" width="1" height="4" fill="#aaffaa"/>
<rect x="1210" y="107" width="1" height="4" fill="#aaffaa"/>
<rect x="1212" y="97" width="1" height="4" fill="#aaffaa"/>
<rect x="1212" y="107" width="1" height="4" fill="#aaffaa"/>
<rect x="1211" y="101" width="1" height="6" fill="#aaffaa"/>
<rect x="1213" y="97" width="1" height="4" fill="#aaffaa"/>
<rect x="1213" y="107" width="1" height="4" fill="#aaffaa"/>
<rect x="1215" y="97" width="1" height="4" fill="#aaffaa"/>
<rect x="1215" y="107" width="1" height="4" fill="#aaffaa"/>
<rect x="1214" y="101" width="1" height="6" fill="#aaffaa"/>
<rect x="1233" y="97" width="1" height="4" fill="#aaffaa"/>
<rect x="1233" y="107" width="1" height="4" fill="#aaffaa"/>
<rect x="1236" y="97" width="1" height="4" fill="#aaffaa"/>
<rect x="1236" y="107" width="1" height="4" fill="#aaffaa"/>
<rect x="1234" y="101" width="1" height="6" fill="#aaffaa"/>
<rect x="1235" y="101" width="1" height="6" fill="#aaffaa"/>
<rect x="1235" y="97" width="1" height="14" fill="#aaffaa"/>
<rect x="1255" y="97" width="1" height="4" fill="#aaffaa"/>
<rect x="1255" y="107" width="1" height="4" fill="#aaffaa"/>
<rect x="1258" y="97" width="1" height="4" fill="#aaffaa"/>
<rect x="1258" y="107" width="1" height="4" fill="#aaffaa"/>
<rect x="1256" y="101" width="1" height="6" fill="#aaffaa"/>
<rect x="1257" y="101" width="1" height="6" fill="#aaffaa"/>
<rect x="1257" y="97" width="1" height="14" fill="#aaffaa"/>
<rect x="1277" y="97" width="1" height="4" fill="#aaffaa"/>
<rect x="1277" y="107" width="1" height="4" fill="#aaffaa"/>
<rect x="1280" y="97" width="1" height="4" fill="#aaffaa"/>
<rect x="1280" y="107" width="1" height="4" fill="#aaffaa"/>
<rect x="1278" y="101" width="1" height="6" fill="#aaffaa"/>
<rect x="1279" y="101" width="1" height="6" fill="#aaffaa"/>
<rect x="1279" y="97" width="1" height="14" fill="#aaffaa"/>
<rect x="1299" y="97" width="1" height="4" fill="#aaffaa"/>
<rect x="1299" y="107" width="1" height="4" fill="#aaffaa"/>
<rect x="1302" y="97" width="1" height="4" fill="#aaffaa"/>
<rect x="1302" y="107" width="1" height="4" fill="#aaffaa"/>
<rect x="1300" y="101" width="1" height="6" fill="#aaffaa"/>
<rect x="1301" y="101" width="1" height="6" fill="#aaffaa"/>
<rect x="1301" y="97" width="1" height="14" fill="#aaffaa"/>
<rect x="1321" y="97" width="1" height="4" fill="#aaffaa"/>
<rect x="1321" y="107" width="1" height="4" fill="#aaffaa"/>
<rect x="1324" y="97" width="1" height="4" fill="#aaffaa"/>
<rect x="1324" y="107" width="1" height="4" fill="#aaffaa"/>
<rect x="1322" y="101" width="1" height="6" fill="#aaffaa"/>
<rect x="1323" y="101" width="1" height="6" fill="#aaffaa"/>
<rect x="1323" y="97" width="1" height="14" fill="#aaffaa"/>
<rect x="1343" y="97" width="1" height="4" fill="#aaffaa"/>
<rect x="1343" y="107" width="1" height="4" fill="#aaffaa"/>
<rect x="1345" y="97" width="1" height="4" fill="#aaffaa"/>
<rect x="1345" y="107" width="1" height="4" fill="#aaffaa"/>
<rect x="1344" y="101" width="1" height="6" fill="#aaffaa"/>
<rect x="1363" y="97" width="1" height="4" fill="#aaffaa"/>
<rect x="1363" y="107" width="1" height="4" fill="#aaffaa"/>
<rect x="1366" y="97" width="1" height="4" fill="#aaffaa"/>
<rect x="1366" y="107" width="1" height="4" fill="#aaffaa"/>
<rect x="1364" y="101" width="1" height="6" fill="#aaffaa"/>
<rect x="1365" y="101" width="1" height="6" fill="#aaffaa"/>
<rect x="1365" y="97" width="1" height="14" fill="#aaffaa"/>
<rect x="1385" y="97" width="1" height="4" fill="#aaffaa"/>
<rect x="1385" y="107" width="1" height="4" fill="#aaffaa"/>
<rect x="1387" y="97" width="1" height="4" fill="#aaffaa"/>
<rect x="1387" y="107" width="1" height="4" fill="#aaffaa"/>
<rect x="1386" y="101" width="1" height="6" fill="#aaffaa"/>
<rect x="1387" y="97" width="1" height="4" fill="#aaffaa"/>
<rect x="1387" y="107" width="1" height="4" fill="#aaffaa"/>
<rect x="1389" y="97" width="1" height="4" fill="#aaffaa"/>
<rect x="1389" y="107" width="1" height="4" fill="#aaffaa"/>
<rect x="1388" y="101" width="1" height="6" fill="#aaffaa"/>
<rect x="1409" y="97" width="1" height="4" fill="#aaffaa"/>
<rect x="1409" y="107" width="1" height="4" fill="#aaffaa"/>
<rect x="1411" y="97" width="1" height="4" fill="#aaffaa"/>
<rect x="1411" y="107" width="1" height="4" fill="#aaffaa"/>
<rect x="1410" y="101" width="1" height="6" fill="#aaffaa"/>
<rect x="1430" y="97" width="1" height="4" fill="#aaffaa"/>
<rect x="1430" y="107" width="1" height="4" fill="#aaffaa"/>
<rect x="1432" y="97" width="1" height="4" fill="#aaffaa"/>
<rect x="1432" y="107" width="1" height="4" fill="#aaffaa"/>
<rect x="1431" y="101" width="1" height="6" fill="#aaffaa"/>
<rect x="1714" y="97" width="1" height="4" fill="#aaffaa"/>
<rect x="1714" y="107" width="1" height="4" fill="#aaffaa"/>
<rect x="1716" y="97" width="1" height="4" fill="#aaffaa"/>
<rect x="1716" y="107" width="1" height="4" fill="#aaffaa"/>
<rect x="1715" y="101" width="1" height="6" fill="#aaffaa"/>
<rect x="1736" y="97" width="1" height="4" fill="#aaffaa"/>
<rect x="1736" y="107" width="1" height="4" fill="#aaffaa"/>
<rect x="1738" y="97" width="1" height="4" fill="#aaffaa"/>
<rect x="1738" y="107" width="1" height="4" fill="#aaffaa"/>
<rect x="1737" y="101" width="1" height="6" fill="#aaffaa"/>
<rect x="1758" y="97" width="1" height="4" fill="#aaffaa"/>
<rect x="1758" y="107" width="1" height="4" fill="#aaffaa"/>
<rect x="1760" y="97" width="1" height="4" fill="#aaffaa"/>
<rect x="1760" y="107" width="1" height="4" fill="#aaffaa"/>
<rect x="1759" y="101" width="1" height="6" fill="#aaffaa"/>
<rect x="1779" y="97" width="1" height="4" fill="#aaffaa"/>
<rect x="1779" y="107" width="1" height="4" fill="#aaffaa"/>
<rect x="1782" y="97" width="1" height="4" fill="#aaffaa"/>
<rect x="1782" y="107" width="1" height="4" fill="#aaffaa"/>
<rect x="1780" y="101" width="1" height="6" fill="#aaffaa"/>
<rect x="1781" y="101" width="1" height="6" fill="#aaffaa"/>
<rect x="1781" y="97" width="1" height="14" fill="#aaffaa"/>
<rect x="1800" y="97" width="1" height="4" fill="#aaffaa"/>
<rect x="1800" y="107" width="1" height="4" fill="#aaffaa"/>
<rect x="1802" y="97" width="1" height="4" fill="#aaffaa"/>
<rect x="1802" y="107" width="1" height="4" fill="#aaffaa"/>
<rect x="1801" y="101" width="1" height="6" fill="#aaffaa"/>
<rect x="1802" y="97" width="1" height="4" fill="#aaffaa"/>
<rect x="1802" y="107" width="1" height="4" fill="#aaffaa"/>
<rect x="1804" y="97" width="1" height="4" fill="#aaffaa"/>
<rect x="1804" y="107" width="1" height="4" fill="#aaffaa"/>
<rect x="1803" y="101" width="1" height="6" fill="#aaffaa"/>
<rect x="1822" y="97" width="1" height="4" fill="#aaffaa"/>
<rect x="1822" y="107" width="1" height="4" fill="#aaffaa"/>
<rect x="1824" y="97" width="1" height="4" fill="#aaffaa"/>
<rect x="1824" y="107" width="1" height="4" fill="#aaffaa"/>
<rect x="1823" y="101" width="1" height="6" fill="#aaffaa"/>
<rect x="1824" y="97" width="1" height="4" fill="#aaffaa"/>
<rect x="1824" y="107" width="1" height="4" fill="#aaffaa"/>
<rect x="1826" y="97" width="1" height="4" fill="#aaffaa"/>
<rect x="1826" y="107" width="1" height="4" fill="#aaffaa"/>
<rect x="1825" y="101" width="1" height="6" fill="#aaffaa"/>
<rect x="1843" y="97" width="1" height="4" fill="#aaffaa"/>
<rect x="1843" y="107" width="1" height="4" fill="#aaffaa"/>
<rect x="1845" y="97" width="1" height="4" fill="#aaffaa"/>
<rect x="1845" y="107" width="1" height="4" fill="#aaffaa"/>
<rect x="1844" y="101" width="1" height="6" fill="#aaffaa"/>
<rect x="1845" y="97" width="1" height="4" fill="#aaffaa"/>
<rect x="1845" y="107" width="1" height="4" fill="#aaffaa"/>
<rect x="1847" y="97" width="1" height="4" fill="#aaffaa"/>
<rect x="1847" y="107" width="1" height="4" fill="#aaffaa"/>
<rect x="1846" y="101" width="1" height="6" fill="#aaffaa"/>
<rect x="1865" y="97" width="1" height="4" fill="#aaffaa"/>
<rect x="1865" y="107" width="1" height="4" fill="#aaffaa"/>
<rect x="1868" y="97" width="1" height="4" fill="#aaffaa"/>
<rect x="1868" y="107" width="1" height="4" fill="#aaffaa"/>
<rect x="1866" y="101" width="1" height="6" fill="#aaffaa"/>
<rect x="1867" y="101" width="1" height="6" fill="#aaffaa"/>
<rect x="1867" y="97" width="1" height="14" fill="#aaffaa"/>
<rect x="1887" y="97" width="1" height="4" fill="#aaffaa"/>
<rect x="1887" y="107" width="1" height="4" fill="#aaffaa"/>
<rect x="1890" y="97" width="1" height="4" fill="#aaffaa"/>
<rect x="1890" y="107" width="1" height="4" fill="#aaffaa"/>
<rect x="1888" y="101" width="1" height="6" fill="#aaffaa"/>
<rect x="1889" y="101" width="1" height="6" fill="#aaffaa"/>
<rect x="1889" y="97" width="1" height="14" fill="#aaffaa"/>
<text x="598" y="109" fill="#fff">0...</text>
<text x="629" y="109" fill="#fff">000...</text>
<text x="673" y="109" fill="#fff">000...</text>
<text x="716" y="109" fill="#fff">001...</text>
<text x="760" y="109" fill="#fff">010...</text>
<text x="804" y="109" fill="#fff">100...</text>
<text x="847" y="109" fill="#fff">000000...</text>
<text x="1436" y="109" fill="#fff">00000000</text>
<rect x="597" y="44" width="46" height="17" fill="#000"/>
<text x="598" y="55" fill="#fff" textLength="43.6" lengthAdjust="spacing">( JTAG )</text>
<rect x="597" y="62" width="50" height="17" fill="#000"/>
<text x="598" y="73" fill="#fff" textLength="47.4" lengthAdjust="spacing">( DDR3 )</text>
<rect x="597" y="80" width="60" height="17" fill="#000"/>
<text x="598" y="91" fill="#fff" textLength="57.3" lengthAdjust="spacing">( User I/O )</text>
<path d="M594 278.5H599.5V290.5H610.5V278.5H621.5V290.5H632.5V278.5H643.5V290.5H654.5V278.5H664.5V290.5H675.5V278.5H686.5V290.5H697.5V278.5H708.5V290.5H719.5V278.5H730.5V290.5H741.5V278.5H752.5V290.5H763.5V278.5H774.5V290.5H785.5V278.5H795.5V290.5H806.5V278.5H817.5V290.5H828.5V278.5H839.5V290.5H850.5V278.5H861.5V290.5H872.5V278.5H883.5V290.5H894.5V278.5H905.5V290.5H915.5V278.5H926.5V290.5H937.5V278.5H948.5V290.5H959.5V278.5H970.5V290.5H981.5V278.5H992.5V290.5H1003.5V278.5H1014.5V290.5H1025.5V278.5H1036.5V290.5H1046.5V278.5H1057.5V290.5H1068.5V278.5H1079.5V290.5H1090.5V278.5H1101.5V290.5H1112.5V278.5H1123.5V290.5H1134.5V278.5H1145.5V290.5H1156.5V278.5H1166.5V290.5H1177.5V278.5H1188.5V290.5H1199.5V278.5H1210.5V290.5H1221.5V278.5H1232.5V290.5H1243.5V278.5H1254.5V290.5H1265.5V278.5H1276.5V290.5H1287.5V278.5H1297.5V290.5H1308.5V278.5H1319.5V290.5H1330.5V278.5H1341.5V290.5H1352.5V278.5H1363.5V290.5H1374.5V278.5H1385.5V290.5H1396.5V278.5H1407.5V290.5H1417.5V278.5H1428.5V290.5H1439.5V278.5H1450.5V290.5H1461.5V278.5H1472.5V290.5H1483.5V278.5H1494.5V290.5H1505.5V278.5H1516.5V290.5H1527.5V278.5H1538.5V290.5H1548.5V278.5H1559.5V290.5H1570.5V278.5H1581.5V290.5H1592.5V278.5H1603.5V290.5H1614.5V278.5H1625.5V290.5H1636.5V278.5H1647.5V290.5H1658.5V278.5H1668.5V290.5H1679.5V278.5H1690.5V290.5H1701.5V278.5H1712.5V290.5H1723.5V278.5H1734.5V290.5H1745.5V278.5H1756.5V290.5H1767.5V278.5H1778.5V290.5H1789.5V278.5H1799.5V290.5H1810.5V278.5H1821.5V290.5H1832.5V278.5H1843.5V290.5H1854.5V278.5H1865.5V290.5H1876.5V278.5H1887.5V290.5H1897" fill="none" stroke="#33f70d" stroke-width="1"/>
<path d="M594 296.5H1897" fill="none" stroke="#33f70d" stroke-width="1"/>
<path d="M594 326.5H1897" fill="none" stroke="#33f70d" stroke-width="1"/>
<rect x="593" y="403" width="521" height="1" fill="#aaffaa"/>
<rect x="593" y="416" width="521" height="1" fill="#aaffaa"/>
<rect x="1115" y="403" width="782" height="1" fill="#aaffaa"/>
<rect x="1115" y="416" width="782" height="1" fill="#aaffaa"/>
<rect x="1113" y="403" width="1" height="4" fill="#aaffaa"/>
<rect x="1113" y="413" width="1" height="4" fill="#aaffaa"/>
<rect x="1115" y="403" width="1" height="4" fill="#aaffaa"/>
<rect x="1115" y="413" width="1" height="4" fill="#aaffaa"/>
<rect x="1114" y="407" width="1" height="6" fill="#aaffaa"/>
<text x="598" y="415" fill="#fff">11111110</text>
<text x="1119" y="415" fill="#fff">10000000</text>
<rect x="593" y="421" width="783" height="1" fill="#aaffaa"/>
<rect x="593" y="434" width="783" height="1" fill="#aaffaa"/>
<rect x="1377" y="421" width="520" height="1" fill="#aaffaa"/>
<rect x="1377" y="434" width="520" height="1" fill="#aaffaa"/>
<rect x="1375" y="421" width="1" height="4" fill="#aaffaa"/>
<rect x="1375" y="431" width="1" height="4" fill="#aaffaa"/>
<rect x="1377" y="421" width="1" height="4" fill="#aaffaa"/>
<rect x="1377" y="431" width="1" height="4" fill="#aaffaa"/>
<rect x="1376" y="425" width="1" height="6" fill="#aaffaa"/>
<text x="598" y="433" fill="#fff">2</text>
<text x="1381" y="433" fill="#fff">3</text>
<path d="M594 452.5H1099.5V440.5H1117.5V452.5H1359.5V440.5H1379.5V452.5H1897" fill="none" stroke="#33f70d" stroke-width="1"/>
<rect x="593" y="457" width="238" height="1" fill="#aaffaa"/>
<rect x="593" y="470" width="238" height="1" fill="#aaffaa"/>
<rect x="832" y="457" width="1065" height="1" fill="#aaffaa"/>
<rect x="832" y="470" width="1065" height="1" fill="#aaffaa"/>
<rect x="830" y="457" width="1" height="4" fill="#aaffaa"/>
<rect x="830" y="467" width="1" height="4" fill="#aaffaa"/>
<rect x="832" y="457" width="1" height="4" fill="#aaffaa"/>
<rect x="832" y="467" width="1" height="4" fill="#aaffaa"/>
<rect x="831" y="461" width="1" height="6" fill="#aaffaa"/>
<text x="598" y="469" fill="#fff">01</text>
<text x="836" y="469" fill="#fff">00</text>
<path d="M594 506.5H1897" fill="none" stroke="#33f70d" stroke-width="1"/>
<path d="M594 524.5H1897" fill="none" stroke="#33f70d" stroke-width="1"/>
<path d="M594 542.5H1897" fill="none" stroke="#33f70d" stroke-width="1"/>
<path d="M594 560.5H1897" fill="none" stroke="#33f70d" stroke-width="1"/>
<path d="M594 578.5H1897" fill="none" stroke="#33f70d" stroke-width="1"/>
<path d="M594 596.5H1897" fill="none" stroke="#33f70d" stroke-width="1"/>
<path d="M594 614.5H1897" fill="none" stroke="#33f70d" stroke-width="1"/>
<path d="M594 632.5H1897" fill="none" stroke="#33f70d" stroke-width="1"/>
<path d="M594 638.5H1897" fill="none" stroke="#33f70d" stroke-width="1"/>
<path d="M594 668.5H1897" fill="none" stroke="#33f70d" stroke-width="1"/>
<path d="M594 686.5H831.5V674.5H852.5V686.5H1114.5V674.5H1136.5V686.5H1376.5V674.5H1398.5V686.5H1897" fill="none" stroke="#33f70d" stroke-width="1"/>
<path d="M594 704.5H815.5V692.5H832.5V704.5H1897" fill="none" stroke="#33f70d" stroke-width="1"/>
<rect x="1116" y="692" width="2" height="13" fill="#33f70d"/>
<rect x="593" y="709" width="500" height="1" fill="#aaffaa"/>
<rect x="1094" y="709" width="23" height="1" fill="#aaffaa"/>
<rect x="1118" y="709" width="238" height="1" fill="#aaffaa"/>
<rect x="1357" y="709" width="20" height="1" fill="#aaffaa"/>
<rect x="1378" y="709" width="283" height="1" fill="#aaffaa"/>
<rect x="1662" y="709" width="21" height="1" fill="#aaffaa"/>
<rect x="1684" y="709" width="108" height="1" fill="#aaffaa"/>
<rect x="1793" y="709" width="22" height="1" fill="#aaffaa"/>
<rect x="1816" y="709" width="81" height="1" fill="#aaffaa"/>
<rect x="1092" y="709" width="1" height="4" fill="#aaffaa"/>
<rect x="1092" y="719" width="1" height="2" fill="#aaffaa"/>
<rect x="1094" y="709" width="1" height="4" fill="#aaffaa"/>
<rect x="1094" y="719" width="1" height="2" fill="#aaffaa"/>
<rect x="1093" y="713" width="1" height="6" fill="#aaffaa"/>
<rect x="1116" y="709" width="1" height="4" fill="#aaffaa"/>
<rect x="1116" y="719" width="1" height="2" fill="#aaffaa"/>
<rect x="1118" y="709" width="1" height="4" fill="#aaffaa"/>
<rect x="1118" y="719" width="1" height="2" fill="#aaffaa"/>
<rect x="1117" y="713" width="1" height="6" fill="#aaffaa"/>
<rect x="1355" y="709" width="1" height="4" fill="#aaffaa"/>
<rect x="1355" y="719" width="1" height="2" fill="#aaffaa"/>
<rect x="1357" y="709" width="1" height="4" fill="#aaffaa"/>
<rect x="1357" y="719" width="1" height="2" fill="#aaffaa"/>
<rect x="1356" y="713" width="1" height="6" fill="#aaffaa"/>
<rect x="1376" y="709" width="1" height="4" fill="#aaffaa"/>
<rect x="1376" y="719" width="1" height="2" fill="#aaffaa"/>
<rect x="1378" y="709" width="1" height="4" fill="#aaffaa"/>
<rect x="1378" y="719" width="1" height="2" fill="#aaffaa"/>
<rect x="1377" y="713" width="1" height="6" fill="#aaffaa"/>
<rect x="1660" y="709" width="1" height="4" fill="#aaffaa"/>
<rect x="1660" y="719" width="1" height="2" fill="#aaffaa"/>
<rect x="1662" y="709" width="1" height="4" fill="#aaffaa"/>
<rect x="1662" y="719" width="1" height="2" fill="#aaffaa"/>
<rect x="1661" y="713" width="1" height="6" fill="#aaffaa"/>
<rect x="1682" y="709" width="1" height="4" fill="#aaffaa"/>
<rect x="1682" y="719" width="1" height="2" fill="#aaffaa"/>
<rect x="1684" y="709" width="1" height="4" fill="#aaffaa"/>
<rect x="1684" y="719" width="1" height="2" fill="#aaffaa"/>
<rect x="1683" y="713" width="1" height="6" fill="#aaffaa"/>
<rect x="1791" y="709" width="1" height="4" fill="#aaffaa"/>
<rect x="1791" y="719" width="1" height="2" fill="#aaffaa"/>
<rect x="1793" y="709" width="1" height="4" fill="#aaffaa"/>
<rect x="1793" y="719" width="1" height="2" fill="#aaffaa"/>
<rect x="1792" y="713" width="1" height="6" fill="#aaffaa"/>
<rect x="1814" y="709" width="1" height="4" fill="#aaffaa"/>
<rect x="1814" y="719" width="1" height="2" fill="#aaffaa"/>
<rect x="1816" y="709" width="1" height="4" fill="#aaffaa"/>
<rect x="1816" y="719" width="1" height="2" fill="#aaffaa"/>
<rect x="1815" y="713" width="1" height="6" fill="#aaffaa"/>
<text x="598" y="721" fill="#fff">00</text>
<text x="1098" y="721" fill="#fff">80</text>
<text x="1122" y="721" fill="#fff">00</text>
<text x="1382" y="721" fill="#fff">80</text>
<text x="1688" y="721" fill="#fff">03</text>
<text x="1820" y="721" fill="#fff">01</text>
<rect x="590" y="721" width="1310" height="3" fill="#fff"/>
<rect x="612" y="727" width="1" height="5" fill="#33f70d"/>
<rect x="667" y="727" width="1" height="5" fill="#33f70d"/>
<rect x="721" y="727" width="1" height="5" fill="#33f70d"/>
<rect x="775" y="724" width="1" height="8" fill="#33f70d"/>
<rect x="830" y="727" width="1" height="5" fill="#33f70d"/>
<rect x="884" y="727" width="1" height="5" fill="#33f70d"/>
<rect x="939" y="727" width="1" height="5" fill="#33f70d"/>
<rect x="993" y="727" width="1" height="5" fill="#33f70d"/>
<rect x="1048" y="724" width="1" height="8" fill="#33f70d"/>
<rect x="1103" y="727" width="1" height="5" fill="#33f70d"/>
<rect x="1157" y="727" width="1" height="5" fill="#33f70d"/>
<rect x="1212" y="727" width="1" height="5" fill="#33f70d"/>
<rect x="1266" y="727" width="1" height="5" fill="#33f70d"/>
<rect x="1321" y="724" width="1" height="8" fill="#33f70d"/>
<rect x="1375" y="727" width="1" height="5" fill="#33f70d"/>
<rect x="1430" y="727" width="1" height="5" fill="#33f70d"/>
<rect x="1484" y="727" width="1" height="5" fill="#33f70d"/>
<rect x="1539" y="727" width="1" height="5" fill="#33f70d"/>
<rect x="1594" y="724" width="1" height="8" fill="#33f70d"/>
<rect x="1648" y="727" width="1" height="5" fill="#33f70d"/>
<rect x="1703" y="727" width="1" height="5" fill="#33f70d"/>
<rect x="1757" y="727" width="1" height="5" fill="#33f70d"/>
<rect x="1812" y="727" width="1" height="5" fill="#33f70d"/>
<rect x="1866" y="724" width="1" height="8" fill="#33f70d"/>
<text x="776.1" y="745" fill="#33f70d" text-anchor="middle">1303000 ns</text>
<text x="1321.8" y="745" fill="#33f70d" text-anchor="middle">1303500 ns</text>
<text x="1867.4" y="745" fill="#33f70d" text-anchor="middle">1304000 ns</text>
<rect x="1897" y="724" width="3" height="24" fill="#000"/>
<rect x="593" y="747" width="1304" height="1" fill="#7d7d7d"/>
<rect x="593" y="765" width="1304" height="1" fill="#7d7d7d"/>
<rect x="593" y="783" width="1304" height="1" fill="#7d7d7d"/>
<rect x="831" y="1" width="3" height="17" fill="#ffd700"/>
<rect x="831" y="22" width="3" height="699" fill="#ffd700"/>
<rect x="831" y="724" width="3" height="41" fill="#ffd700"/>
<rect x="1377" y="1" width="1" height="17" fill="#ffd700"/>
<rect x="1377" y="22" width="1" height="699" fill="#ffd700"/>
<rect x="1377" y="724" width="1" height="59" fill="#ffd700"/>
<rect x="831" y="254" width="3" height="1" fill="#d8280d"/>
<rect x="1377" y="254" width="1" height="1" fill="#d8280d"/>
<rect x="831" y="236" width="3" height="1" fill="#d8280d"/>
<rect x="1377" y="224" width="1" height="1" fill="#d8280d"/>
<rect x="831" y="218" width="3" height="1" fill="#d8280d"/>
<rect x="1377" y="218" width="1" height="1" fill="#d8280d"/>
<rect x="831" y="200" width="3" height="1" fill="#d8280d"/>
<rect x="1377" y="200" width="1" height="1" fill="#d8280d"/>
<rect x="831" y="182" width="3" height="1" fill="#d8280d"/>
<rect x="1377" y="182" width="1" height="1" fill="#d8280d"/>
<rect x="831" y="164" width="3" height="1" fill="#d8280d"/>
<rect x="1377" y="164" width="1" height="1" fill="#d8280d"/>
<rect x="831" y="146" width="3" height="1" fill="#d8280d"/>
<rect x="1377" y="146" width="1" height="1" fill="#d8280d"/>
<rect x="831" y="116" width="3" height="1" fill="#d8280d"/>
<rect x="1377" y="128" width="1" height="1" fill="#d8280d"/>
<rect x="831" y="97" width="3" height="1" fill="#5528aa"/>
<rect x="831" y="110" width="3" height="1" fill="#5528aa"/>
<rect x="1377" y="97" width="1" height="1" fill="#5528aa"/>
<rect x="1377" y="110" width="1" height="1" fill="#5528aa"/>
<rect x="831" y="278" width="3" height="1" fill="#d8280d"/>
<rect x="1377" y="278" width="1" height="1" fill="#d8280d"/>
<rect x="831" y="296" width="3" height="1" fill="#d8280d"/>
<rect x="1377" y="296" width="1" height="1" fill="#d8280d"/>
<rect x="831" y="326" width="3" height="1" fill="#d8280d"/>
<rect x="1377" y="326" width="1" height="1" fill="#d8280d"/>
<rect x="831" y="403" width="3" height="1" fill="#5528aa"/>
<rect x="831" y="416" width="3" height="1" fill="#5528aa"/>
<rect x="1377" y="403" width="1" height="1" fill="#5528aa"/>
<rect x="1377" y="416" width="1" height="1" fill="#5528aa"/>
<rect x="831" y="421" width="3" height="1" fill="#5528aa"/>
<rect x="831" y="434" width="3" height="1" fill="#5528aa"/>
<rect x="1377" y="421" width="1" height="1" fill="#5528aa"/>
<rect x="1377" y="434" width="1" height="1" fill="#5528aa"/>
<rect x="831" y="452" width="3" height="1" fill="#d8280d"/>
<rect x="1377" y="440" width="1" height="1" fill="#d8280d"/>
<rect x="831" y="457" width="3" height="1" fill="#5528aa"/>
<rect x="831" y="470" width="3" height="1" fill="#5528aa"/>
<rect x="1377" y="457" width="1" height="1" fill="#5528aa"/>
<rect x="1377" y="470" width="1" height="1" fill="#5528aa"/>
<rect x="831" y="506" width="3" height="1" fill="#d8280d"/>
<rect x="1377" y="506" width="1" height="1" fill="#d8280d"/>
<rect x="831" y="524" width="3" height="1" fill="#d8280d"/>
<rect x="1377" y="524" width="1" height="1" fill="#d8280d"/>
<rect x="831" y="542" width="3" height="1" fill="#d8280d"/>
<rect x="1377" y="542" width="1" height="1" fill="#d8280d"/>
<rect x="831" y="560" width="3" height="1" fill="#d8280d"/>
<rect x="1377" y="560" width="1" height="1" fill="#d8280d"/>
<rect x="831" y="578" width="3" height="1" fill="#d8280d"/>
<rect x="1377" y="578" width="1" height="1" fill="#d8280d"/>
<rect x="831" y="596" width="3" height="1" fill="#d8280d"/>
<rect x="1377" y="596" width="1" height="1" fill="#d8280d"/>
<rect x="831" y="614" width="3" height="1" fill="#d8280d"/>
<rect x="1377" y="614" width="1" height="1" fill="#d8280d"/>
<rect x="831" y="632" width="3" height="1" fill="#d8280d"/>
<rect x="1377" y="632" width="1" height="1" fill="#d8280d"/>
<rect x="831" y="638" width="3" height="1" fill="#d8280d"/>
<rect x="1377" y="638" width="1" height="1" fill="#d8280d"/>
<rect x="831" y="668" width="3" height="1" fill="#d8280d"/>
<rect x="1377" y="668" width="1" height="1" fill="#d8280d"/>
<rect x="831" y="674" width="3" height="1" fill="#d8280d"/>
<rect x="1377" y="674" width="1" height="1" fill="#d8280d"/>
<rect x="831" y="704" width="3" height="1" fill="#d8280d"/>
<rect x="1377" y="704" width="1" height="1" fill="#d8280d"/>
<rect x="831" y="709" width="3" height="1" fill="#5528aa"/>
<rect x="1377" y="709" width="1" height="1" fill="#5528aa"/>
<rect x="593" y="756" width="68" height="1" fill="#fff"/>
<rect x="765" y="756" width="66" height="1" fill="#fff"/>
<text x="661" y="763" fill="#fff">802518.418753 ns</text>
<rect x="890" y="774" width="202" height="1" fill="#fff"/>
<rect x="1175" y="774" width="202" height="1" fill="#fff"/>
<text x="1092" y="781" fill="#fff">499.451095 ns</text>
<rect x="775.5" y="766.5" width="114" height="16" fill="#000" stroke="#ffd700" stroke-width="1"/>
<text x="777" y="780" fill="#ffd700">1303051.615072 ns</text>
<rect x="1320.5" y="784.5" width="114" height="16" fill="#000" stroke="#ffd700" stroke-width="1"/>
<text x="1322" y="798" fill="#ffd700">1303551.066167 ns</text>
</svg>
<div style="left:53px;top:765px;width:437px;height:18px;background:#fff;"></div>
<div style="left:493px;top:765px;width:94px;height:18px;background:#fff;"></div>
<div class="t r" style="left:300px;top:726px;width:183px;color:#fff">Now</div>
<div style="left:493px;top:726px;width:94px;height:18px;overflow:hidden"><div class="t r" style="right:7px;top:0;color:#fff;font-size:12.4px">1505120 ns</div></div>
<div class="t r" style="left:300px;top:747px;width:183px;color:#fff">Cursor 1</div>
<div style="left:493px;top:747px;width:94px;height:18px;overflow:hidden"><div class="t r" style="right:7px;top:0;color:#fff;font-size:12.4px">1300533.196319 ns</div></div>
<div class="t r" style="left:300px;top:765px;width:183px;color:#000">Cursor 2</div>
<div style="left:493px;top:765px;width:94px;height:18px;overflow:hidden"><div class="t r" style="right:7px;top:0;color:#000;font-size:12.4px">1303051.615072 ns</div></div>
<div class="t r" style="left:300px;top:783px;width:183px;color:#fff">Cursor 3</div>
<div style="left:493px;top:783px;width:94px;height:18px;overflow:hidden"><div class="t r" style="right:7px;top:0;color:#fff;font-size:12.4px">1303551.066167 ns</div></div>
<svg style="left:12px;top:750px" width="13" height="13"><defs><linearGradient id="lk" x1="0" y1="0" x2="0" y2="1"><stop offset="0" stop-color="#f8e49c"/><stop offset="0.45" stop-color="#f0c858"/><stop offset="1" stop-color="#dc9c20"/></linearGradient></defs><path d="M3.5 4 V2.8 A2.4 2.2 0 0 1 8.3 2.8 V3.2" fill="none" stroke="#b8a8a0" stroke-width="1.3"/><rect x="0.3" y="3" width="11.8" height="9" rx="0.8" fill="url(#lk)"/><rect x="3" y="5.5" width="1.2" height="4" fill="#fff4c8" opacity="0.8"/><rect x="5.2" y="5.5" width="1.6" height="4" fill="#c89028" opacity="0.8"/><rect x="8" y="5.5" width="1.2" height="4" fill="#fff4c8" opacity="0.8"/><rect x="0.3" y="11" width="11.8" height="1" fill="#c88c18"/></svg>
<svg style="left:27px;top:750px" width="13" height="13"><path d="M1.2 11.5 L6 6" stroke="#6c98e0" stroke-width="2.8" stroke-linecap="round"/><path d="M1 12 L3.5 9.5" stroke="#4c78c8" stroke-width="2.2" stroke-linecap="round"/><path d="M5.5 6.5 L8 3.5" stroke="#b0bcd8" stroke-width="1.8"/><path d="M7.6 0.8 L7.4 3.4 L9 4.8 L11.6 4.4" stroke="#e4e8f4" stroke-width="1.3" fill="none"/></svg>
<svg style="left:40.5px;top:750.5px" width="14" height="14"><circle cx="6.4" cy="6.4" r="5.8" fill="#c45050"/><circle cx="6.4" cy="6.2" r="4.7" fill="#e87474"/><rect x="3.6" y="5.4" width="5.6" height="2" rx="0.5" fill="#fff4f4"/></svg>
<svg style="left:12px;top:768px" width="13" height="13"><defs><linearGradient id="lk" x1="0" y1="0" x2="0" y2="1"><stop offset="0" stop-color="#f8e49c"/><stop offset="0.45" stop-color="#f0c858"/><stop offset="1" stop-color="#dc9c20"/></linearGradient></defs><path d="M3.5 4 V2.8 A2.4 2.2 0 0 1 8.3 2.8 V3.2" fill="none" stroke="#b8a8a0" stroke-width="1.3"/><rect x="0.3" y="3" width="11.8" height="9" rx="0.8" fill="url(#lk)"/><rect x="3" y="5.5" width="1.2" height="4" fill="#fff4c8" opacity="0.8"/><rect x="5.2" y="5.5" width="1.6" height="4" fill="#c89028" opacity="0.8"/><rect x="8" y="5.5" width="1.2" height="4" fill="#fff4c8" opacity="0.8"/><rect x="0.3" y="11" width="11.8" height="1" fill="#c88c18"/></svg>
<svg style="left:27px;top:768px" width="13" height="13"><path d="M1.2 11.5 L6 6" stroke="#6c98e0" stroke-width="2.8" stroke-linecap="round"/><path d="M1 12 L3.5 9.5" stroke="#4c78c8" stroke-width="2.2" stroke-linecap="round"/><path d="M5.5 6.5 L8 3.5" stroke="#b0bcd8" stroke-width="1.8"/><path d="M7.6 0.8 L7.4 3.4 L9 4.8 L11.6 4.4" stroke="#e4e8f4" stroke-width="1.3" fill="none"/></svg>
<svg style="left:40.5px;top:768.5px" width="14" height="14"><circle cx="6.4" cy="6.4" r="5.8" fill="#c45050"/><circle cx="6.4" cy="6.2" r="4.7" fill="#e87474"/><rect x="3.6" y="5.4" width="5.6" height="2" rx="0.5" fill="#fff4f4"/></svg>
<svg style="left:12px;top:786px" width="13" height="13"><defs><linearGradient id="lk" x1="0" y1="0" x2="0" y2="1"><stop offset="0" stop-color="#f8e49c"/><stop offset="0.45" stop-color="#f0c858"/><stop offset="1" stop-color="#dc9c20"/></linearGradient></defs><path d="M3.5 4 V2.8 A2.4 2.2 0 0 1 8.3 2.8 V3.2" fill="none" stroke="#b8a8a0" stroke-width="1.3"/><rect x="0.3" y="3" width="11.8" height="9" rx="0.8" fill="url(#lk)"/><rect x="3" y="5.5" width="1.2" height="4" fill="#fff4c8" opacity="0.8"/><rect x="5.2" y="5.5" width="1.6" height="4" fill="#c89028" opacity="0.8"/><rect x="8" y="5.5" width="1.2" height="4" fill="#fff4c8" opacity="0.8"/><rect x="0.3" y="11" width="11.8" height="1" fill="#c88c18"/></svg>
<svg style="left:27px;top:786px" width="13" height="13"><path d="M1.2 11.5 L6 6" stroke="#6c98e0" stroke-width="2.8" stroke-linecap="round"/><path d="M1 12 L3.5 9.5" stroke="#4c78c8" stroke-width="2.2" stroke-linecap="round"/><path d="M5.5 6.5 L8 3.5" stroke="#b0bcd8" stroke-width="1.8"/><path d="M7.6 0.8 L7.4 3.4 L9 4.8 L11.6 4.4" stroke="#e4e8f4" stroke-width="1.3" fill="none"/></svg>
<svg style="left:40.5px;top:786.5px" width="14" height="14"><circle cx="6.4" cy="6.4" r="5.8" fill="#c45050"/><circle cx="6.4" cy="6.2" r="4.7" fill="#e87474"/><rect x="3.6" y="5.4" width="5.6" height="2" rx="0.5" fill="#fff4f4"/></svg>
<svg style="left:13px;top:730px" width="13" height="13"><rect x="0.5" y="7.5" width="12" height="4.5" fill="#7484a0" opacity="0.9"/><path d="M1.5 9 L4.5 1.5 L7.5 9Z" fill="#c4ccd4"/><path d="M5.5 9 L8.5 2.5 L11 9Z" fill="#8c98a4"/><path d="M7 4 L9 6 L9.5 3Z" fill="#3c4858"/><rect x="1" y="9" width="11" height="1" fill="#b4bcc8"/></svg>
<svg style="left:27px;top:730px" width="13" height="13"><rect x="0" y="0" width="12" height="12" fill="#6088c0"/><rect x="0" y="0" width="12" height="2" fill="#4c78b4"/><rect x="1" y="2.5" width="10" height="6.5" fill="#c4d4ec"/><rect x="1.5" y="3.5" width="8" height="1" fill="#f4f8ff"/><rect x="1.5" y="5.5" width="6" height="1" fill="#f4f8ff"/><rect x="9" y="7" width="1.5" height="1.5" fill="#f4f8ff"/><rect x="0" y="10" width="12" height="2" fill="#7c9ccc"/></svg>
<svg style="left:40.5px;top:730px" width="14" height="14"><circle cx="6.4" cy="6.5" r="6" fill="#58985c"/><circle cx="6.4" cy="6.4" r="4.6" fill="#80c484"/><rect x="3.9" y="5.4" width="5" height="2.2" rx="0.6" fill="#c4ffc4"/><rect x="5.3" y="4" width="2.2" height="5" rx="0.6" fill="#c4ffc4"/></svg>
<div style="left:4px;top:802px;width:486px;height:2px;background:#fff;"></div>
<div style="left:493px;top:802px;width:94px;height:2px;background:#fff;"></div>
<div style="left:590px;top:801px;width:1310px;height:3px;background:#fff;"></div>
<div style="left:3px;top:804px;width:487px;height:1px;background:#ececec;"></div>
<div style="left:493px;top:804px;width:94px;height:1px;background:#ececec;"></div>
<div style="left:590px;top:804px;width:1310px;height:1px;background:#ececec;"></div>
<div style="left:3px;top:805px;width:9px;height:11px;background:#808080;"></div>
<svg style="left:12px;top:805px" width="12" height="11"><rect width="12" height="11" fill="#c3c3c3"/><path d="M1 5.5 L11 0.5 L11 11Z" fill="#fff"/><path d="M1 5.5 L11 11" stroke="#7c7c7c" stroke-width="1" fill="none"/><path d="M11.5 0 V11" stroke="#ececec" stroke-width="1"/></svg>
<div style="left:24px;top:805px;width:454px;height:11px;background:#e0e0e0;"></div>
<div style="left:24px;top:805px;width:453px;height:11px;background:#fff;border-bottom:1px solid #909090;border-right:1px solid #909090;box-sizing:border-box"></div>
<svg style="left:478px;top:805px" width="12" height="11"><rect width="12" height="11" fill="#c3c3c3"/><path d="M11 5.5 L1 0.5 L1 11Z" fill="#fff"/><path d="M11 5.5 L1 11" stroke="#7c7c7c" stroke-width="1" fill="none"/></svg>
<svg style="left:494px;top:805px" width="12" height="11"><rect width="12" height="11" fill="#c3c3c3"/><path d="M1 5.5 L11 0.5 L11 11Z" fill="#fff"/><path d="M1 5.5 L11 11" stroke="#7c7c7c" stroke-width="1" fill="none"/><path d="M11.5 0 V11" stroke="#ececec" stroke-width="1"/></svg>
<div style="left:493px;top:805px;width:1px;height:11px;background:#c3c3c3;"></div>
<div style="left:506px;top:805px;width:69px;height:11px;background:#e0e0e0;"></div>
<div style="left:507px;top:805px;width:67px;height:11px;background:#fff;border-bottom:1px solid #909090;border-right:1px solid #909090;box-sizing:border-box"></div>
<svg style="left:575px;top:805px" width="12" height="11"><rect width="12" height="11" fill="#c3c3c3"/><path d="M11 5.5 L1 0.5 L1 11Z" fill="#fff"/><path d="M11 5.5 L1 11" stroke="#7c7c7c" stroke-width="1" fill="none"/></svg>
<div style="left:590px;top:805px;width:1310px;height:11px;background:#c3c3c3;"></div>
<svg style="left:591px;top:805px" width="12" height="11"><rect width="12" height="11" fill="#c3c3c3"/><path d="M1 5.5 L11 0.5 L11 11Z" fill="#fff"/><path d="M1 5.5 L11 11" stroke="#7c7c7c" stroke-width="1" fill="none"/><path d="M11.5 0 V11" stroke="#ececec" stroke-width="1"/></svg>
<svg style="left:1887px;top:805px" width="12" height="11"><rect width="12" height="11" fill="#c3c3c3"/><path d="M11 5.5 L1 0.5 L1 11Z" fill="#fff"/><path d="M11 5.5 L1 11" stroke="#7c7c7c" stroke-width="1" fill="none"/></svg>
<div style="left:1715px;top:805px;width:10px;height:10px;background:#fff;border-bottom:1px solid #909090;border-right:1px solid #909090;box-sizing:border-box"></div>
<div style="left:1030px;top:806px;width:1px;height:9px;background:#ffd700;"></div>
<div style="left:1900px;top:0px;width:3px;height:816px;background:#fff;"></div>
<div style="left:1903px;top:0px;width:13px;height:18px;background:#808080;"></div>
<div style="left:1903px;top:19px;width:13px;height:2px;background:#fff;"></div>
<div style="left:1903px;top:21px;width:13px;height:700px;background:#c3c3c3;"></div>
<div style="left:1903px;top:21px;width:1px;height:700px;background:#9c9c9c;"></div>
<div style="left:1915px;top:21px;width:1px;height:700px;background:#ececec;"></div>
<div style="left:1904px;top:720px;width:11px;height:1px;background:#ececec;"></div>
<svg style="left:1903px;top:21px" width="13" height="13"><path d="M6.5 1 L1 12 L12 12Z" fill="#fff"/><path d="M6.5 1 L12 12 L1 12" stroke="#787878" stroke-width="1" fill="none"/></svg>
<div style="left:1904px;top:34px;width:11px;height:667px;background:#fff;border-right:1px solid #8c8c8c;border-bottom:1px solid #8c8c8c;box-sizing:border-box"></div>
<svg style="left:1903px;top:708px" width="13" height="13"><path d="M6.5 12.5 L1 1.5 L12 1.5Z" fill="#fff"/><path d="M6.5 12.5 L12 1.5" stroke="#787878" stroke-width="1" fill="none"/><path d="M1 1.5 L6.5 12.5" stroke="#e8e8e8" stroke-width="1" fill="none"/></svg>
<div style="left:1903px;top:721px;width:13px;height:3px;background:#fff;"></div>
<div style="left:1903px;top:724px;width:13px;height:77px;background:#808080;"></div>
<div style="left:1903px;top:801px;width:13px;height:3px;background:#fff;"></div>
<div style="left:1903px;top:804px;width:13px;height:1px;background:#ececec;"></div>
<div style="left:1903px;top:805px;width:13px;height:11px;background:#808080;"></div>
<div style="left:1916px;top:0px;width:2px;height:843px;background:#fff;"></div>
<div style="left:1918px;top:0px;width:1px;height:843px;background:#9a9a9a;"></div>
<div style="left:1919px;top:0px;width:3px;height:843px;background:#e8e8e8;"></div>
<div style="left:1922px;top:0px;width:1px;height:843px;background:#8a8a8a;"></div>
<div style="left:1923px;top:0px;width:1px;height:843px;background:#fff;"></div>
<div style="left:0px;top:816px;width:1916px;height:27px;background:#e8e8e8;"></div>
<div style="left:1px;top:819px;width:1901px;height:21px;background:#fff;border:1px solid #909090;box-sizing:border-box"></div>
<div style="left:197px;top:820px;width:1px;height:19px;background:#909090;"></div>
<div style="left:2px;top:820px;width:190px;height:19px;overflow:hidden"><div class="t" style="left:6px;top:-1px;color:#000;font-size:12.4px">1302832589729 fs to 1304027600829 fs</div></div>
<div class="t" style="left:204px;top:819px;color:#000;font-size:12px">Input / Output Signals</div>
<svg style="left:1903px;top:826px" width="13" height="13"><path d="M12 1 L1 12 M12 5 L5 12 M12 9 L9 12" stroke="#909090" stroke-width="1"/></svg>
<!--BOTTOM-->
</div></body></html>
